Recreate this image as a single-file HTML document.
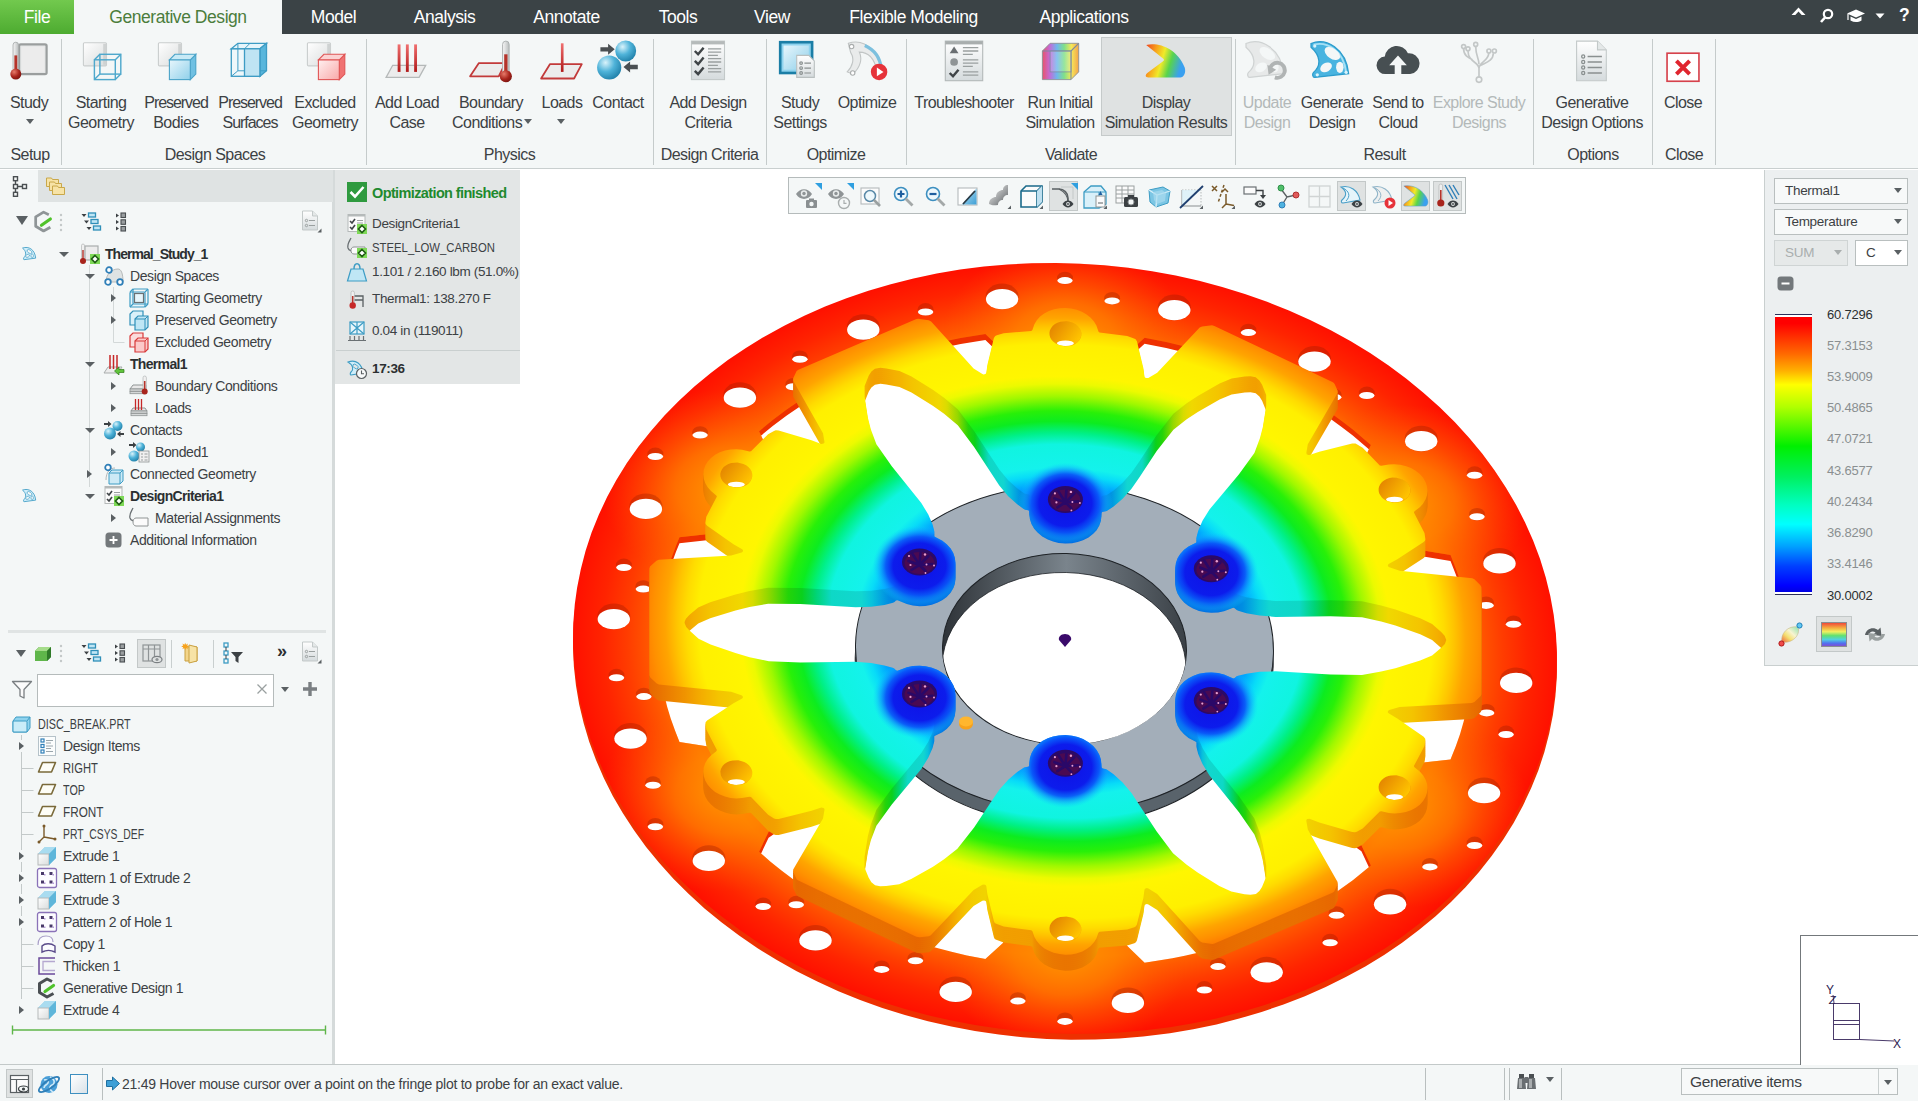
<!DOCTYPE html>
<html><head><meta charset="utf-8"><title>Generative Design</title>
<style>
*{box-sizing:border-box}
html,body{margin:0;padding:0}
body{width:1918px;height:1101px;overflow:hidden;position:relative;background:#fff;font-family:"Liberation Sans",sans-serif;color:#3c4144}
.abs{position:absolute}
#topbar{position:absolute;left:0;top:0;width:1918px;height:34px;background:#3b4346}
#filetab{position:absolute;left:0;top:0;width:74px;height:34px;background:linear-gradient(#72c94e,#4dab30);color:#fff;font-size:17.5px;letter-spacing:-.4px;text-align:center;line-height:34px}
#gdtab{position:absolute;left:74px;top:0;width:208px;height:35px;background:#f4f7f7;color:#4b7d3c;font-size:17.5px;letter-spacing:-.45px;text-align:center;line-height:34px}
.tab{position:absolute;top:0;height:34px;line-height:34px;color:#fff;font-size:17.5px;letter-spacing:-.45px;transform:translateX(-50%);white-space:nowrap}
#ribbon{position:absolute;left:0;top:34px;width:1918px;height:135px;background:#f4f7f7;border-bottom:1px solid #c9cfcf}
.rsep{position:absolute;top:39px;height:126px;width:1px;background:#c5cbcb}
.rb{position:absolute;top:93px;transform:translateX(-50%);text-align:center;font-size:16px;letter-spacing:-.55px;line-height:19.5px;white-space:nowrap;color:#3c4144}
.rb.dis{color:#b3b9b9}
.gl{position:absolute;top:145px;transform:translateX(-50%);font-size:16px;letter-spacing:-.55px;line-height:19px;white-space:nowrap;color:#3c4144}
.ric{position:absolute;top:40px;width:44px;height:44px;transform:translateX(-50%)}
.ns{letter-spacing:-1.05px}
.dar{position:absolute;width:0;height:0;border-left:4.5px solid transparent;border-right:4.5px solid transparent;border-top:5px solid #5a6063}
#left{position:absolute;left:0;top:170px;width:332px;height:894px;background:#f4f7f7}
#leftedge{position:absolute;left:332px;top:170px;width:3px;height:894px;background:#d5dada}
.tr{position:absolute;font-size:14px;letter-spacing:-.4px;line-height:22px;height:22px;white-space:nowrap;color:#3c4144}
.tr b{font-weight:bold;color:#2b2f31;letter-spacing:-.68px}
.exp{position:absolute;width:0;height:0;border-top:4.5px solid transparent;border-bottom:4.5px solid transparent;border-left:5px solid #5a6063}
.col{position:absolute;width:0;height:0;border-left:5px solid transparent;border-right:5px solid transparent;border-top:5.5px solid #5a6063}
.ti{position:absolute;width:22px;height:22px}
#status{position:absolute;left:0;top:1064px;width:1918px;height:37px;background:#f4f7f7;border-top:1px solid #c3c9c9}
#optpanel{position:absolute;left:335px;top:170px;width:185px;height:214px;background:#e3e6e6}
.op{position:absolute;left:36px;font-size:13.5px;letter-spacing:-.35px;line-height:20px;white-space:nowrap;color:#3c4144}
#legend{position:absolute;left:1764px;top:170px;width:154px;height:496px;background:#eceff0;border-left:1px solid #c9cfcf;border-bottom:1px solid #c9cfcf}
.dd{position:absolute;height:26px;background:#f7f9f9;border:1px solid #b9bfbf;font-size:13.5px;letter-spacing:-.3px;line-height:23px;padding-left:10px;color:#3c4144}
.dd i{position:absolute;right:5px;top:9px;width:0;height:0;border-left:4.5px solid transparent;border-right:4.5px solid transparent;border-top:5px solid #5a6063}
.lv{position:absolute;left:62px;font-size:13px;letter-spacing:-.2px;line-height:16px;color:#8a8f91}
#gtb{position:absolute;left:788px;top:177px;width:678px;height:37px;background:#f4f7f7;border:1px solid #b5bbbb}
</style></head><body>


<svg width="0" height="0" style="position:absolute">
<defs>
<linearGradient id="gBlue" x1="0" y1="0" x2="1" y2="1"><stop offset="0" stop-color="#e8f6fc"/><stop offset="1" stop-color="#8fd0ea"/></linearGradient>
<linearGradient id="gRed" x1="0" y1="0" x2="1" y2="1"><stop offset="0" stop-color="#fff0f0"/><stop offset="1" stop-color="#f9a9a9"/></linearGradient>
<linearGradient id="gGrey" x1="0" y1="0" x2="1" y2="1"><stop offset="0" stop-color="#ffffff"/><stop offset="1" stop-color="#d9dcdc"/></linearGradient>
<linearGradient id="gDoc" x1="0" y1="0" x2="0" y2="1"><stop offset="0" stop-color="#ffffff"/><stop offset="1" stop-color="#d5dbdd"/></linearGradient>
<radialGradient id="gBall" cx=".35" cy=".3" r=".75"><stop offset="0" stop-color="#d9f3fb"/><stop offset=".5" stop-color="#4fb3d9"/><stop offset="1" stop-color="#1f7fa8"/></radialGradient>
<radialGradient id="gBulb" cx=".35" cy=".3" r=".75"><stop offset="0" stop-color="#e77a6a"/><stop offset=".6" stop-color="#a8241c"/><stop offset="1" stop-color="#7a1410"/></radialGradient>
<linearGradient id="gRain" x1="0" y1="0" x2="1" y2="0"><stop offset="0" stop-color="#e8546a"/><stop offset=".2" stop-color="#c46ad6"/><stop offset=".4" stop-color="#6fb6ee"/><stop offset=".6" stop-color="#7fe08a"/><stop offset=".8" stop-color="#f5e85a"/><stop offset="1" stop-color="#f4a34a"/></linearGradient>
<linearGradient id="gFringe" x1="0" y1="0" x2="1" y2=".25"><stop offset="0" stop-color="#f0401e"/><stop offset=".28" stop-color="#f7a21c"/><stop offset=".5" stop-color="#f0ea2a"/><stop offset=".72" stop-color="#58d44c"/><stop offset="1" stop-color="#3aa0f0"/></linearGradient>
<linearGradient id="gStem" x1="0" y1="0" x2="1" y2="0"><stop offset="0" stop-color="#f8f8f8"/><stop offset="1" stop-color="#b9bdbd"/></linearGradient>
<linearGradient id="gRedBar" x1="0" y1="0" x2="0" y2="1"><stop offset="0" stop-color="#f07070"/><stop offset="1" stop-color="#b01818"/></linearGradient>
</defs></svg>

<div id="topbar"></div><div id="filetab">File</div><div id="gdtab">Generative Design</div>
<div class="tab" style="left:333.5px">Model</div>
<div class="tab" style="left:444.5px">Analysis</div>
<div class="tab" style="left:566.5px">Annotate</div>
<div class="tab" style="left:678px">Tools</div>
<div class="tab" style="left:772px">View</div>
<div class="tab" style="left:913.5px">Flexible Modeling</div>
<div class="tab" style="left:1084px">Applications</div>
<svg class="abs" style="left:1785px;top:0" width="133" height="34" viewBox="0 0 133 34">
<path d="M6.500 15l7-7.500 7 7.500h-3.800l-3.200-3.400-3.200 3.400z" fill="#fff"/>
<circle cx="43" cy="14" r="4.200" fill="none" stroke="#fff" stroke-width="2.200"/><path d="M40 17.500l-4 4.500" stroke="#fff" stroke-width="2.600"/>
<path d="M62 13.500l9-4 9 4-9 4z" fill="#fff"/><path d="M65.500 16.500v4c3.500 2 7.500 2 11 0v-4l-5.500 2.500z" fill="#fff"/><path d="M63 14v6" stroke="#fff" stroke-width="1.200"/>
<path d="M90.500 13.500h9l-4.500 5z" fill="#fff"/>
<text x="114" y="20.800" font-family="Liberation Sans, sans-serif" font-weight="bold" font-size="17.500" fill="#fff">?</text>
</svg>
<div id="ribbon"></div>
<div class="rsep" style="left:61px"></div>
<div class="rsep" style="left:366px"></div>
<div class="rsep" style="left:653px"></div>
<div class="rsep" style="left:766px"></div>
<div class="rsep" style="left:906px"></div>
<div class="rsep" style="left:1235px"></div>
<div class="rsep" style="left:1533px"></div>
<div class="rsep" style="left:1652px"></div>
<div class="rsep" style="left:1715px"></div>
<div class="abs" style="left:1101px;top:37px;width:131px;height:99px;background:#dfe2e2;border:1px solid #c5caca"></div>
<svg class="ric" style="left:29px" viewBox="0 0 40 40"><g transform="translate(-2 0)"><rect x="13" y="4" width="25" height="27" rx="1.5" fill="#e4e6e6" stroke="#9a9e9e" stroke-width="2"/><rect x="15" y="6" width="21" height="23" fill="#ececec"/>
<rect x="7.5" y="2" width="5" height="27" rx="2.5" fill="url(#gStem)" stroke="#a9adad" stroke-width=".8"/><rect x="8.7" y="14" width="2.6" height="14" fill="#b5332a"/><circle cx="10" cy="31" r="5" fill="url(#gBulb)"/></g></svg>
<div class="rb" style="left:29px">Study</div>
<svg class="ric" style="left:101px" viewBox="0 0 40 40"><rect x="4" y="2.500" width="21" height="21" rx="1" fill="url(#gGrey)" stroke="#c9cdcd"/><path d="M22 3.500h3v19h-3z" fill="#cfd2d2"/><g fill="none" stroke="#4fa8cc" stroke-width="1.300"><rect x="14" y="18" width="19" height="18"/><rect x="19" y="13" width="19" height="18"/><path d="M14 18l5-5M33 18l5-5M14 36l5-5M33 36l5-5"/></g></svg>
<div class="rb" style="left:101px">Starting<br>Geometry</div>
<svg class="ric" style="left:176px" viewBox="0 0 40 40"><rect x="4" y="2.500" width="21" height="21" rx="1" fill="url(#gGrey)" stroke="#c9cdcd"/><path d="M22 3.500h3v19h-3z" fill="#cfd2d2"/><path d="M33 18l5-5v18l-5 5z" fill="#6fc0e2" stroke="#4aa3c8"/><rect x="14" y="18" width="19" height="18" fill="url(#gBlue)" stroke="#4aa3c8"/><path d="M14 18l5-5h19l-5 5z" fill="#c8eaf6" stroke="#4aa3c8"/></svg>
<div class="rb" style="left:176px"><span class=ns>Preserved</span><br>Bodies</div>
<svg class="ric" style="left:250px" viewBox="0 0 40 40"><g stroke="#3d9cc4" stroke-width="1.2"><path d="M3 8l6-5h26l-6 5z" fill="#e6f5fb"/><rect x="3" y="8" width="26" height="25" fill="#e9f6fb" fill-opacity=".6"/><path d="M29 8l6-5v25l-6 5z" fill="#58b6dc"/><path d="M15 8l5-5M9 3v25l-6 5M9 28h26" fill="none" stroke-width=".9"/><rect x="15" y="8" width="14" height="25" fill="#bfe4f3"/></g></svg>
<div class="rb" style="left:250px"><span class=ns>Preserved</span><br><span class=ns>Surfaces</span></div>
<svg class="ric" style="left:325px" viewBox="0 0 40 40"><rect x="4" y="2.500" width="21" height="21" rx="1" fill="url(#gGrey)" stroke="#c9cdcd"/><path d="M22 3.500h3v19h-3z" fill="#cfd2d2"/><path d="M33 18l5-5v18l-5 5z" fill="#f07272" stroke="#e05555"/><rect x="14" y="18" width="19" height="18" fill="url(#gRed)" stroke="#e05555"/><path d="M14 18l5-5h19l-5 5z" fill="#fbd2d2" stroke="#e05555"/></svg>
<div class="rb" style="left:325px">Excluded<br>Geometry</div>
<svg class="ric" style="left:407px" viewBox="0 0 40 40"><path d="M7 23h30l-6 11H1z" fill="#ececec" stroke="#b5b9b9" stroke-width="1.2"/><g fill="url(#gRedBar)"><rect x="11.5" y="4" width="2.6" height="25"/><rect x="19" y="4" width="2.6" height="25"/><rect x="26.500" y="4" width="2.6" height="25"/></g></svg>
<div class="rb" style="left:407px">Add Load<br>Case</div>
<svg class="ric" style="left:491px" viewBox="0 0 40 40"><path d="M9 21h24l-6 12H1z" fill="#ececec" stroke="#c23a3a" stroke-width="1.6" stroke-linejoin="round"/><rect x="30.500" y="1" width="6" height="30" rx="3" fill="url(#gStem)" stroke="#a9adad" stroke-width=".8"/><rect x="32" y="13" width="3" height="17" fill="#b5332a"/><circle cx="33.5" cy="33" r="5.500" fill="url(#gBulb)"/></svg>
<div class="rb" style="left:491px">Boundary<br>Conditions&nbsp;&nbsp;</div>
<svg class="ric" style="left:562px" viewBox="0 0 40 40"><path d="M9 22h29l-7 13H1z" fill="#ececec" stroke="#c23a3a" stroke-width="1.6" stroke-linejoin="round"/><rect x="19" y="3" width="2.400" height="26" fill="url(#gRedBar)"/></svg>
<div class="rb" style="left:562px">Loads</div>
<svg class="ric" style="left:618px" viewBox="0 0 40 40"><circle cx="27" cy="10" r="9.500" fill="url(#gBall)"/><circle cx="12" cy="25" r="11" fill="url(#gBall)"/><path d="M4 6.500h7v-3l6 5-6 5v-3H4z" fill="#4a4f52"/><path d="M38 22.500h-7v-3l-6 5 6 5v-3h7z" fill="#4a4f52"/></svg>
<div class="rb" style="left:618px">Contact</div>
<svg class="ric" style="left:708px" viewBox="0 0 40 40"><rect x="5" y="1" width="30" height="35" fill="url(#gDoc)" stroke="#c3c9c9"/><rect x="5" y="1" width="30" height="3" fill="#b5baba"/>
<g stroke="#3f4447" stroke-width="2.200" fill="none"><path d="M8 10l3 3 5-6"/><path d="M8 19l3 3 5-6"/><path d="M8 28l3 3 5-6"/></g>
<g stroke="#9aa0a0" stroke-width="1.200"><path d="M20 8h12M20 11h12M20 14h9M20 17h12M20 20h12M20 23h9M20 26h12M20 29h12"/></g></svg>
<div class="rb" style="left:708px">Add Design<br>Criteria</div>
<svg class="ric" style="left:800px" viewBox="0 0 40 40"><rect x="2" y="2" width="29" height="28" fill="#8fd3ee" stroke="#1b7ea6" stroke-width="2.400"/><rect x="5" y="5" width="23" height="22" fill="url(#gBlue)"/>
<path d="M17 14h11l5 5v15H17z" fill="url(#gDoc)" stroke="#b9bfbf"/><g stroke="#8a9090" stroke-width="1.100" fill="none"><circle cx="21" cy="21" r="1.200"/><circle cx="21" cy="25.500" r="1.200"/><circle cx="21" cy="30" r="1.200"/><path d="M24 21h6M24 25.500h6M24 30h6"/></g></svg>
<div class="rb" style="left:800px">Study<br>Settings</div>
<svg class="ric" style="left:867px" viewBox="0 0 40 40"><path d="M3 3c9-3 17 1 22 6 5 5 8 12 8 18l-4 1C27 18 22 11 13 11c3 6 1 14-6 20l-5-2c5-5 7-12 3-18z" fill="#e9ebeb" stroke="#c1c5c5"/><path d="M18 5c9 4 14 12 15 21" fill="none" stroke="#7cc0de" stroke-width="3"/><circle cx="6" cy="6" r="2" fill="#fff" stroke="#a9adad"/><circle cx="7" cy="30" r="2" fill="#fff" stroke="#a9adad"/>
<circle cx="31" cy="29" r="7.500" fill="#e6333a"/><path d="M29 25l6 4-6 4z" fill="#fff"/></svg>
<div class="rb" style="left:867px">Optimize</div>
<svg class="ric" style="left:964px" viewBox="0 0 40 40"><rect x="3" y="1" width="34" height="36" fill="url(#gDoc)" stroke="#b3b9b9"/><rect x="3" y="1" width="34" height="3" fill="#a9aeae"/>
<path d="M7 12l4-6 4 6z" fill="#6a6f72"/><circle cx="11" cy="20" r="3.500" fill="#8f9496"/><path d="M7 30l3 3 5-6" stroke="#3f4447" stroke-width="2.200" fill="none"/>
<g stroke="#9aa0a0" stroke-width="1.200"><path d="M19 7h14M19 10h14M19 13h9M19 18h14M19 21h14M19 24h9M19 29h14M19 32h14"/></g></svg>
<div class="rb" style="left:964px">Troubleshooter</div>
<svg class="ric" style="left:1060px" viewBox="0 0 40 40"><path d="M4 10l7-7h26v26l-7 7H4z" fill="url(#gRain)" stroke="#8a8f95" stroke-width=".8"/><path d="M4 10h26v26M30 10l7-7" fill="none" stroke="#7d8aa0" stroke-width="1"/><rect x="11" y="10" width="19" height="19" fill="#fff" fill-opacity=".18" stroke="#7d8aa0" stroke-width=".7"/></svg>
<div class="rb" style="left:1060px">Run Initial<br>Simulation</div>
<svg class="ric" style="left:1166px" viewBox="0 0 40 40"><path d="M2 4.500C14 2 30 8 37 25c1.500 5-1 9-4 9H4c-3 0-3-2-1-4l14-10.500c1.500-1 1.500-2 0-3z" fill="url(#gFringe)"/></svg>
<div class="rb" style="left:1166px">Display<br>Simulation Results</div>
<svg class="ric" style="left:1267px" viewBox="0 0 40 40"><g opacity=".75" transform="translate(-2.500 -2.500) scale(1.140)"><path d="M3 5c12-5 28 4 30 24l-27 3c-2 0-2-3-1-4 6-5 6-13-2-20z" fill="#e3e5e5" stroke="#c3c7c7"/><ellipse cx="20" cy="13" rx="7" ry="4" transform="rotate(35 20 13)" fill="#f4f7f7"/><ellipse cx="15" cy="24" rx="5" ry="3.500" transform="rotate(-30 15 24)" fill="#f4f7f7"/><ellipse cx="26" cy="24" rx="3" ry="4" fill="#f4f7f7"/>
<path d="M22 26a6 6 0 1 1 4 6" fill="none" stroke="#9a9e9e" stroke-width="3"/><path d="M20 22l1 8 6-4z" fill="#9a9e9e"/></g></svg>
<div class="rb dis" style="left:1267px">Update<br>Design</div>
<svg class="ric" style="left:1332px" viewBox="0 0 40 40"><g transform="translate(-2.500 -2.500) scale(1.140)"><path d="M3 5c12-5 28 4 30 24l-27 3c-2 0-2-3-1-4 6-5 6-13-2-20z" fill="#49b4e0" stroke="#2b9ccc"/><path d="M5 6c10-3 24 4 26 22" fill="none" stroke="#a5e0f5" stroke-width="1.500"/><ellipse cx="20" cy="13" rx="7" ry="4" transform="rotate(35 20 13)" fill="#f4f7f7"/><ellipse cx="15" cy="24" rx="5" ry="3.500" transform="rotate(-30 15 24)" fill="#f4f7f7"/><ellipse cx="26" cy="24" rx="3" ry="4.500" fill="#f4f7f7"/><circle cx="6" cy="7" r="1.300" fill="#d9f3fb"/><circle cx="8" cy="30" r="1.300" fill="#d9f3fb"/><circle cx="31" cy="28" r="1.300" fill="#d9f3fb"/></g></svg>
<div class="rb" style="left:1332px">Generate<br>Design</div>
<svg class="ric" style="left:1398px" viewBox="0 0 40 40"><path d="M9 31a8 8 0 0 1-1-16 11 11 0 0 1 21-3 9.500 9.500 0 0 1 2 19z" fill="#474f52"/><path d="M20 14l8 9h-5v9h-6v-9h-5z" fill="#f4f7f7"/></svg>
<div class="rb" style="left:1398px">Send to<br>Cloud</div>
<svg class="ric" style="left:1479px" viewBox="0 0 40 40"><g fill="none" stroke="#c3c7c7" stroke-width="1.500"><path d="M20 34V24M20 26c0-6-10-6-10-16M20 26c0-6 8-6 9-14M20 22c0-5-3-8-3-16M20 24c4-3 13-4 13-12M14 18c-4-2-8-4-8-10"/><circle cx="20" cy="36" r="2.500"/><circle cx="10" cy="8" r="1.800"/><circle cx="17" cy="4" r="1.800"/><circle cx="29" cy="10" r="1.800"/><circle cx="34" cy="12" r="1.800" transform="translate(0 -2)"/><circle cx="6" cy="6" r="1.800"/></g></svg>
<div class="rb dis" style="left:1479px">Explore Study<br>Designs</div>
<svg class="ric" style="left:1592px" viewBox="0 0 40 40"><path d="M6 1h19l8 8v28H6z" fill="url(#gDoc)" stroke="#c3c9c9"/><path d="M25 1v8h8" fill="#e4e8e8" stroke="#c3c9c9"/><g stroke="#8a9090" stroke-width="1.200" fill="none"><circle cx="12" cy="15" r="1.400"/><circle cx="12" cy="20" r="1.400"/><circle cx="12" cy="25" r="1.400"/><circle cx="12" cy="30" r="1.400"/><path d="M16 15h13M16 20h13M16 25h13M16 30h13"/></g></svg>
<div class="rb" style="left:1592px">Generative<br>Design Options</div>
<svg class="ric" style="left:1683px" viewBox="0 0 40 40"><g transform="translate(0 3)"><rect x="5.500" y="9" width="29" height="25.500" fill="#fff" stroke="#d6424c" stroke-width="1.500"/><path d="M14 16l12 12M26 16L14 28" stroke="#e0252f" stroke-width="3.600"/></g></svg>
<div class="rb" style="left:1683px">Close</div>
<div class="dar" style="left:26px;top:119px"></div>
<div class="dar" style="left:524px;top:119px"></div>
<div class="dar" style="left:557px;top:119px"></div>
<div class="gl" style="left:30px">Setup</div>
<div class="gl" style="left:215px">Design Spaces</div>
<div class="gl" style="left:509.5px">Physics</div>
<div class="gl" style="left:709.5px">Design Criteria</div>
<div class="gl" style="left:836px">Optimize</div>
<div class="gl" style="left:1071px">Validate</div>
<div class="gl" style="left:1384.5px">Result</div>
<div class="gl" style="left:1593px">Options</div>
<div class="gl" style="left:1684px">Close</div>
<div id="left"></div><div id="leftedge"></div>
<div class="abs" style="left:38px;top:170px;width:295px;height:32px;background:#dfe3e3"></div>
<svg class="abs" style="left:8px;top:174px" width="24" height="26" viewBox="0 0 24 26"><g fill="#f4f7f7" stroke="#4a4f52" stroke-width="1.400"><path d="M7.500 6v14M10 12.500h5" fill="none"/><rect x="5.500" y="2.700" width="4" height="4"/><rect x="5.500" y="10.500" width="4" height="4"/><rect x="5.500" y="18.300" width="4" height="4"/><rect x="14.500" y="10.500" width="4" height="4"/></g></svg>
<svg class="abs" style="left:44px;top:174px" width="24" height="24" viewBox="0 0 24 24"><g fill="#f7e3a6" stroke="#c9a84a" stroke-width="1"><path d="M2.500 4h5l1 1.500h6v7h-12z"/><path d="M5.500 8h5l1 1.500h6v7h-12z"/><path d="M8.500 12h5l1 1.500h6v7h-12z"/></g></svg>
<div class="col" style="left:15.500px;top:216px;border-left-width:6px;border-right-width:6px;border-top-width:9px"></div>
<svg class="abs" style="left:32px;top:210px" width="23.1" height="23.1" viewBox="0 0 22 22"><path d="M16 4.500L11 2 3.500 6.500v9L11 20l6.500-3.500" fill="none" stroke="#8f9597" stroke-width="2.600" stroke-linejoin="round"/><path d="M9 14.500l8.500-6" stroke="#4fc22a" stroke-width="3" stroke-linecap="round"/></svg>
<svg class="abs" style="left:59px;top:212px" width="4" height="20" viewBox="0 0 4 20"><g fill="#c3c8c8"><circle cx="2" cy="3" r="1.200"/><circle cx="2" cy="8" r="1.200"/><circle cx="2" cy="13" r="1.200"/><circle cx="2" cy="18" r="1.200"/></g></svg>
<svg class="abs" style="left:80px;top:211px" width="22" height="22" viewBox="0 0 22 22"><g fill="#3c4144"><path d="M1.500 3h5l-2.500 3zM4 9.500h5l-2.500 3zM6.500 16h5l-2.500 3z"/></g><g fill="#bfe6f5" stroke="#2f8fb8" stroke-width="1.300"><rect x="8.500" y="2" width="7" height="4"/><rect x="11" y="8.500" width="7" height="4"/><rect x="13.500" y="15" width="7" height="4"/></g></svg>
<svg class="abs" style="left:110px;top:211px" width="22" height="22" viewBox="0 0 22 22"><g fill="#3c4144"><path d="M6 2.500l3 2-3 2zM6 9l3 2-3 2zM6 15.500l3 2-3 2z"/></g><g fill="#9a9ea0" stroke="#4a4f52" stroke-width="1.100"><rect x="11" y="2" width="4.500" height="4.500"/><rect x="11" y="8.800" width="4.500" height="4.500"/><rect x="11" y="15.500" width="4.500" height="4.500"/></g></svg>
<svg class="abs" style="left:299px;top:209px" width="24" height="26" viewBox="0 0 24 26"><path d="M3.500 2h10l5 5v14h-15z" fill="url(#gDoc)" stroke="#c3c9c9"/><path d="M13.500 2v5h5" fill="#e4e8e8" stroke="#c3c9c9"/><g stroke="#9aa0a0" fill="none"><circle cx="7.500" cy="11.500" r="1.200"/><circle cx="7.500" cy="16.500" r="1.200"/><path d="M10 11.500h6M10 16.500h6"/></g><path d="M22.500 19.500v4h-4z" fill="#5a6063"/></svg>
<svg class="abs" style="left:0;top:170px" width="333" height="460" viewBox="0 170 333 460"><g fill="none" stroke="#d3d8d8" stroke-width="1"><path d="M89.500 265v222M113.500 287v55.500h11"/></g></svg>
<svg class="ti" style="left:79px;top:243px" viewBox="0 0 22 22"><rect x="6" y="3" width="13" height="14" fill="#ececec" stroke="#a9adad" stroke-width="1.200"/><rect x="2.500" y="1" width="3" height="15" rx="1.500" fill="#f0f0f0" stroke="#a9adad" stroke-width=".6"/><rect x="3.300" y="7" width="1.400" height="9" fill="#b5332a"/><circle cx="4" cy="18" r="3" fill="#a8241c"/>
<rect x="11" y="11" width="10" height="10" fill="#7ed957"/><path d="M16 12.500l3.500 3.500-3.500 3.500-3.500-3.500z" fill="#fff" stroke="#1f5c14" stroke-width="1.600"/></svg>
<div class="tr" style="left:105px;top:243px"><b style="letter-spacing:-.95px">Thermal_Study_1</b></div>
<div class="col" style="left:59px;top:252px"></div>
<svg class="ti" style="left:102.5px;top:265px" viewBox="0 0 22 22"><path d="M3 17c0-8 6-13 12-13 3 0 5 4 5 13z" fill="#dfe3e3" stroke="#b5b9b9"/><g fill="#fff" stroke="#2f7fb8" stroke-width="1.800"><circle cx="6" cy="5" r="2.800"/><circle cx="5" cy="17" r="2.800"/><circle cx="17" cy="17" r="2.800"/></g></svg>
<div class="tr" style="left:130px;top:265px">Design Spaces</div>
<div class="col" style="left:84.5px;top:274px"></div>
<svg class="ti" style="left:128px;top:287px" viewBox="0 0 22 22"><g fill="none" stroke="#3d9cc4" stroke-width="1.200"><rect x="2" y="5" width="15" height="15" rx="1" fill="#e6f5fb"/><rect x="5" y="2" width="15" height="15" rx="1"/><path d="M2 5l3-3M17 5l3-3M2 20l3-3M17 20l3-3"/></g><rect x="6.500" y="6.500" width="9" height="9" fill="none" stroke="#6a7073" stroke-width="1.200"/></svg>
<div class="tr" style="left:155px;top:287px">Starting Geometry</div>
<div class="exp" style="left:111.0px;top:293.5px"></div>
<svg class="ti" style="left:128px;top:309px" viewBox="0 0 22 22"><path d="M2 5l3-3h10v11l-3 3H2z" fill="#d9f0f9" stroke="#2f8fb8" stroke-width="1.200"/><path d="M7 10l3-3h10v11l-3 3H7z" fill="#bfe6f5" stroke="#2f8fb8" stroke-width="1.200"/><path d="M7 10h10v11M17 10l3-3" fill="none" stroke="#2f8fb8" stroke-width="1"/></svg>
<div class="tr" style="left:155px;top:309px">Preserved Geometry</div>
<div class="exp" style="left:111.0px;top:315.5px"></div>
<svg class="ti" style="left:128px;top:331px" viewBox="0 0 22 22"><path d="M2 5l3-3h10v11l-3 3H2z" fill="#fbdcdc" stroke="#d83a3a" stroke-width="1.200"/><path d="M7 10l3-3h10v11l-3 3H7z" fill="#fbcaca" stroke="#d83a3a" stroke-width="1.200"/><path d="M7 10h10v11M17 10l3-3" fill="none" stroke="#d83a3a" stroke-width="1"/></svg>
<div class="tr" style="left:155px;top:331px">Excluded Geometry</div>
<svg class="ti" style="left:102.5px;top:353px" viewBox="0 0 22 22"><path d="M5 14h14l-4 6H1z" fill="#ececec" stroke="#a9adad"/><g stroke="#c62828" stroke-width="1.500"><path d="M7 2v14M10.500 2v14M14 2v14"/></g><path d="M21 16.500h-5v-2.500l-4.500 4 4.500 4v-2.500h5z" fill="#5fc43a" stroke="#2f7a18" stroke-width=".7"/></svg>
<div class="tr" style="left:130px;top:353px"><b>Thermal1</b></div>
<div class="col" style="left:84.5px;top:362px"></div>
<svg class="ti" style="left:128px;top:375px" viewBox="0 0 22 22"><path d="M2 14l3-4h13v4z" fill="#e8e8e8" stroke="#8f9494"/><rect x="2" y="14" width="16" height="2.200" fill="#d5d8d8" stroke="#8f9494" stroke-width=".8"/><rect x="2" y="16.500" width="16" height="2.200" fill="#d5d8d8" stroke="#8f9494" stroke-width=".8"/><rect x="15" y="1" width="3.400" height="14" rx="1.700" fill="#f0f0f0" stroke="#a9adad" stroke-width=".6"/><rect x="15.900" y="6" width="1.600" height="9" fill="#b5332a"/><circle cx="16.700" cy="16.500" r="3" fill="#a8241c"/></svg>
<div class="tr" style="left:155px;top:375px">Boundary Conditions</div>
<div class="exp" style="left:111.0px;top:381.5px"></div>
<svg class="ti" style="left:128px;top:397px" viewBox="0 0 22 22"><path d="M3 14l2-3h12l2 3z" fill="#e8e8e8" stroke="#8f9494"/><rect x="3" y="14" width="16" height="2.200" fill="#d5d8d8" stroke="#8f9494" stroke-width=".8"/><rect x="3" y="16.500" width="16" height="2.200" fill="#d5d8d8" stroke="#8f9494" stroke-width=".8"/><g stroke="#c62828" stroke-width="1.300"><path d="M7.500 2v11M10.500 2v11M13.500 2v11"/></g></svg>
<div class="tr" style="left:155px;top:397px">Loads</div>
<div class="exp" style="left:111.0px;top:403.5px"></div>
<svg class="ti" style="left:102.5px;top:419px" viewBox="0 0 22 22"><circle cx="14.500" cy="7" r="5" fill="url(#gBall)"/><circle cx="7" cy="14.500" r="6" fill="url(#gBall)"/><path d="M1 4h4v-2l3.500 3-3.500 3v-2H1z" fill="#3c4144"/><path d="M21 14h-3.500v-2l-3.500 3 3.500 3v-2H21z" fill="#3c4144"/></svg>
<div class="tr" style="left:130px;top:419px">Contacts</div>
<div class="col" style="left:84.5px;top:428px"></div>
<svg class="ti" style="left:128px;top:441px" viewBox="0 0 22 22"><circle cx="12.500" cy="6" r="4.500" fill="url(#gBall)"/><circle cx="6" cy="15" r="5.500" fill="url(#gBall)"/><path d="M1 3h4v-2l3.500 3-3.500 3v-2H1z" fill="#3c4144"/><rect x="11" y="10" width="10" height="11" fill="#f0f0f0" stroke="#8f9494" stroke-width=".8"/><g stroke="#8f9494" stroke-width=".9"><path d="M13 13h2M16.500 13h3M13 16h2M16.500 16h3M13 19h2M16.500 19h3"/></g></svg>
<div class="tr" style="left:155px;top:441px">Bonded1</div>
<div class="exp" style="left:111.0px;top:447.5px"></div>
<svg class="ti" style="left:102.5px;top:463px" viewBox="0 0 22 22"><path d="M3 17c0-8 4-12 9-12" fill="none" stroke="#b5b9b9"/><path d="M6 10l3-3h11v11l-3 3H6z" fill="#cdeaf6" stroke="#3d9cc4"/><path d="M6 10h11v11M17 10l3-3" fill="none" stroke="#3d9cc4"/><circle cx="5" cy="4.500" r="2.800" fill="#fff" stroke="#2f7fb8" stroke-width="1.800"/></svg>
<div class="tr" style="left:130px;top:463px">Connected Geometry</div>
<div class="exp" style="left:87.0px;top:469.5px"></div>
<svg class="ti" style="left:102.5px;top:485px" viewBox="0 0 22 22"><rect x="2" y="1.500" width="17" height="17" fill="#fbfbfb" stroke="#b5b9b9"/><rect x="2" y="1.500" width="17" height="2" fill="#b5baba"/><g stroke="#3f4447" stroke-width="1.600" fill="none"><path d="M4 8l2 2 3-4"/><path d="M4 14l2 2 3-4"/></g><g stroke="#9aa0a0"><path d="M11 7.500h6M11 10h6M11 13h6"/></g>
<rect x="11" y="11" width="10" height="10" fill="#7ed957"/><path d="M16 12.500l3.500 3.500-3.500 3.500-3.500-3.500z" fill="#fff" stroke="#1f5c14" stroke-width="1.600"/></svg>
<div class="tr" style="left:130px;top:485px"><b>DesignCriteria1</b></div>
<div class="col" style="left:84.5px;top:494px"></div>
<svg class="ti" style="left:128px;top:507px" viewBox="0 0 22 22"><path d="M5 1c-2 4-4 6-3 10 1 3 4 3 6 2" fill="none" stroke="#6a7073" stroke-width="1.300"/><path d="M8 11h12v8H8c-2 0-3-2-3-4s1-4 3-4z" fill="#fbfbfb" stroke="#8f9494"/></svg>
<div class="tr" style="left:155px;top:507px">Material Assignments</div>
<div class="exp" style="left:111.0px;top:513.5px"></div>
<svg class="ti" style="left:102.5px;top:529px" viewBox="0 0 22 22"><rect x="2.500" y="3.500" width="16" height="15" rx="3.500" fill="#73787b"/><path d="M10.500 7v8M6.500 11h8" stroke="#fff" stroke-width="1.800"/></svg>
<div class="tr" style="left:130px;top:529px">Additional Information</div>
<svg class="abs" style="left:21px;top:245px" width="17" height="17" viewBox="0 0 22 22"><path d="M2 4c8-3 16 2 17 13l-15 2c-1 0-1-2 0-3 3-3 3-8-2-12z" fill="#cfeefa" stroke="#3d9cc4" stroke-width="1.100"/><ellipse cx="11" cy="8.500" rx="3.600" ry="2" transform="rotate(35 11 8.500)" fill="#f4f7f7" stroke="#3d9cc4" stroke-width=".8"/><ellipse cx="8.500" cy="14" rx="2.600" ry="1.800" transform="rotate(-30 8.500 14)" fill="#f4f7f7" stroke="#3d9cc4" stroke-width=".8"/><ellipse cx="14.500" cy="14" rx="1.600" ry="2.300" fill="#f4f7f7" stroke="#3d9cc4" stroke-width=".8"/></svg>
<svg class="abs" style="left:21px;top:487px" width="17" height="17" viewBox="0 0 22 22"><path d="M2 4c8-3 16 2 17 13l-15 2c-1 0-1-2 0-3 3-3 3-8-2-12z" fill="#cfeefa" stroke="#3d9cc4" stroke-width="1.100"/><ellipse cx="11" cy="8.500" rx="3.600" ry="2" transform="rotate(35 11 8.500)" fill="#f4f7f7" stroke="#3d9cc4" stroke-width=".8"/><ellipse cx="8.500" cy="14" rx="2.600" ry="1.800" transform="rotate(-30 8.500 14)" fill="#f4f7f7" stroke="#3d9cc4" stroke-width=".8"/><ellipse cx="14.500" cy="14" rx="1.600" ry="2.300" fill="#f4f7f7" stroke="#3d9cc4" stroke-width=".8"/></svg>
<div class="abs" style="left:8px;top:629.500px;width:318px;height:3px;background:#e0e4e4"></div>
<div class="col" style="left:15.500px;top:650px;border-left-width:5px;border-right-width:5px;border-top-width:7px"></div>
<svg class="abs" style="left:32px;top:643px" width="22" height="22" viewBox="0 0 22 22"><path d="M3 8l4-4h12v10l-4 4H3z" fill="#3f9a35"/><path d="M3 8l4-4h12l-4 4z" fill="#a5dc8a"/><rect x="3" y="8" width="12" height="10" fill="#5fb64a"/><path d="M15 8l4-4v10l-4 4z" fill="#2f7a28"/></svg>
<svg class="abs" style="left:59px;top:643px" width="4" height="20" viewBox="0 0 4 20"><g fill="#c3c8c8"><circle cx="2" cy="3" r="1.200"/><circle cx="2" cy="8" r="1.200"/><circle cx="2" cy="13" r="1.200"/><circle cx="2" cy="18" r="1.200"/></g></svg>
<svg class="abs" style="left:80px;top:642px" width="22" height="22" viewBox="0 0 22 22"><g fill="#3c4144"><path d="M1.500 3h5l-2.500 3zM4 9.500h5l-2.500 3zM6.500 16h5l-2.500 3z"/></g><g fill="#bfe6f5" stroke="#2f8fb8" stroke-width="1.300"><rect x="8.500" y="2" width="7" height="4"/><rect x="11" y="8.500" width="7" height="4"/><rect x="13.500" y="15" width="7" height="4"/></g></svg>
<svg class="abs" style="left:109px;top:642px" width="22" height="22" viewBox="0 0 22 22"><g fill="#3c4144"><path d="M6 2.500l3 2-3 2zM6 9l3 2-3 2zM6 15.500l3 2-3 2z"/></g><g fill="#9a9ea0" stroke="#4a4f52" stroke-width="1.100"><rect x="11" y="2" width="4.500" height="4.500"/><rect x="11" y="8.800" width="4.500" height="4.500"/><rect x="11" y="15.500" width="4.500" height="4.500"/></g></svg>
<div class="abs" style="left:137px;top:639px;width:29px;height:29px;background:#dfe2e2;border:1px solid #c3c8c8"></div>
<svg class="abs" style="left:140px;top:642px" width="24" height="24" viewBox="0 0 24 24"><g fill="none" stroke="#8f9496" stroke-width="1.200"><rect x="3" y="3" width="17" height="16"/><path d="M3 7h17M8.500 3v16M14.500 3v16"/></g><ellipse cx="17" cy="17.500" rx="5" ry="3.200" fill="#dfe2e2" stroke="#7a7f82" stroke-width="1.200"/><circle cx="17" cy="17.500" r="1.600" fill="#8f9496"/></svg>
<div class="abs" style="left:171px;top:640px;width:1px;height:28px;background:#c9cfcf"></div>
<svg class="abs" style="left:180px;top:641px" width="24" height="24" viewBox="0 0 24 24"><path d="M5 6h12v14H5z" fill="#f3d58a" stroke="#c9a040"/><path d="M9 4l8 2v14l-8 2z" fill="#f7e3a6" stroke="#c9a040"/><path d="M4 1l1 2.500L7.500 2 6.500 4.500 9 5.500 6.500 6.500 7.500 9 5 7.500 4 10 3 7.500.500 9l1-2.500L-1 5.500l2.500-1L.500 2 3 3.500z" fill="#f7a21c" transform="translate(2 1) scale(.8)"/></svg>
<div class="abs" style="left:213px;top:640px;width:1px;height:28px;background:#c9cfcf"></div>
<svg class="abs" style="left:221px;top:641px" width="26" height="24" viewBox="0 0 26 24"><g fill="#f4f7f7" stroke="#3d9cc4" stroke-width="1.300"><rect x="3" y="2" width="4" height="4"/><rect x="3" y="10" width="4" height="4"/><rect x="3" y="18" width="4" height="4"/></g><path d="M5 6v4M5 14v4" stroke="#3c4144"/><path d="M10 11h12l-4.500 5v6l-3-2v-4z" fill="#3c4144"/></svg>
<div class="abs" style="left:277px;top:641px;font-size:18px;font-weight:bold;color:#2b2f31;line-height:20px">»</div>
<svg class="abs" style="left:299px;top:640px" width="24" height="26" viewBox="0 0 24 26"><path d="M3.500 2h10l5 5v14h-15z" fill="url(#gDoc)" stroke="#c3c9c9"/><path d="M13.500 2v5h5" fill="#e4e8e8" stroke="#c3c9c9"/><g stroke="#9aa0a0" fill="none"><circle cx="7.500" cy="11.500" r="1.200"/><circle cx="7.500" cy="16.500" r="1.200"/><path d="M10 11.500h6M10 16.500h6"/></g><path d="M22.500 19.500v4h-4z" fill="#5a6063"/></svg>
<svg class="abs" style="left:11px;top:679px" width="22" height="22" viewBox="0 0 22 22"><path d="M1.500 2.500h19l-7.500 8v8.500l-4-2v-6.500z" fill="#fbfbfb" stroke="#7a7f82" stroke-width="1.300" stroke-linejoin="round"/></svg>
<div class="abs" style="left:37px;top:673.500px;width:237px;height:33px;background:#fff;border:1px solid #b5bbbb"></div>
<svg class="abs" style="left:256px;top:683px" width="12" height="12" viewBox="0 0 12 12"><path d="M1.500 1.500l9 9M10.500 1.500l-9 9" stroke="#9aa0a0" stroke-width="1.300"/></svg>
<div class="dar" style="left:280.500px;top:687px"></div>
<svg class="abs" style="left:303px;top:682px" width="14" height="14" viewBox="0 0 14 14"><path d="M7 0v14M0 7h14" stroke="#7a7f82" stroke-width="3.400"/></svg>
<svg class="abs" style="left:0;top:720px" width="333" height="320" viewBox="0 720 333 320"><g fill="none" stroke="#c3c9c9" stroke-width="1"><path d="M21.500 735v264M21.500 768.500h12M21.500 790.500h12M21.500 812.500h12M21.500 834.500h12M21.500 944.500h12M21.500 966.500h12M21.500 988.500h12"/></g><path d="M12 1030h314M12.500 1025.500v9M325.500 1025.500v9" stroke="#5fb64a" stroke-width="1.400" fill="none"/></svg>
<svg class="ti" style="left:11px;top:713px" viewBox="0 0 22 22"><path d="M2 8l3-4h14v11l-3 4H2z" fill="#8fd3ee" stroke="#3d9cc4"/><rect x="2" y="8" width="14" height="11" rx="1" fill="#c9ecf8" stroke="#3d9cc4"/><path d="M16 8l3-4" stroke="#3d9cc4"/></svg>
<div class="tr" style="left:38px;top:713px"><span style="display:inline-block;letter-spacing:0;transform:scaleX(0.77);transform-origin:0 50%">DISC_BREAK.PRT</span></div>
<svg class="ti" style="left:36px;top:735px" viewBox="0 0 22 22"><rect x="2.500" y="1.500" width="17" height="19" fill="#fbfdfd" stroke="#b5c2c9"/><g fill="#fff" stroke="#2f7fb8" stroke-width="1.200"><rect x="5" y="4" width="3" height="3"/><rect x="5" y="9.500" width="3" height="3"/><rect x="5" y="15" width="3" height="3"/></g><g stroke="#9aa6ac"><path d="M10 5.500h7M10 8h5M10 11h7M10 13.500h5M10 16.500h7"/></g></svg>
<div class="tr" style="left:63px;top:735px">Design Items</div>
<div class="abs" style="left:17px;top:740px;width:9px;height:12px;background:#f4f7f7"></div><div class="exp" style="left:19px;top:741.5px"></div>
<svg class="ti" style="left:36px;top:757px" viewBox="0 0 22 22"><path d="M6.500 5.500h13l-4 9.500h-13z" fill="#fdfdf6" stroke="#7a6a3a" stroke-width="1.600" stroke-linejoin="round"/></svg>
<div class="tr" style="left:63px;top:757px"><span style="display:inline-block;letter-spacing:0;transform:scaleX(0.8);transform-origin:0 50%">RIGHT</span></div>
<svg class="ti" style="left:36px;top:779px" viewBox="0 0 22 22"><path d="M6.500 5.500h13l-4 9.500h-13z" fill="#fdfdf6" stroke="#7a6a3a" stroke-width="1.600" stroke-linejoin="round"/></svg>
<div class="tr" style="left:63px;top:779px"><span style="display:inline-block;letter-spacing:0;transform:scaleX(0.77);transform-origin:0 50%">TOP</span></div>
<svg class="ti" style="left:36px;top:801px" viewBox="0 0 22 22"><path d="M6.500 5.500h13l-4 9.500h-13z" fill="#fdfdf6" stroke="#7a6a3a" stroke-width="1.600" stroke-linejoin="round"/></svg>
<div class="tr" style="left:63px;top:801px"><span style="display:inline-block;letter-spacing:0;transform:scaleX(0.84);transform-origin:0 50%">FRONT</span></div>
<svg class="ti" style="left:36px;top:823px" viewBox="0 0 22 22"><g stroke="#7a5a2a" stroke-width="1.400" fill="none"><path d="M8 3v11l-5 5M8 14l11 2"/></g><g fill="#7a5a2a"><circle cx="8" cy="3" r="1.500"/><circle cx="3" cy="19" r="1.500"/><circle cx="19" cy="16" r="1.500"/></g></svg>
<div class="tr" style="left:63px;top:823px"><span style="display:inline-block;letter-spacing:0;transform:scaleX(0.74);transform-origin:0 50%">PRT_CSYS_DEF</span></div>
<svg class="ti" style="left:36px;top:845px" viewBox="0 0 22 22"><path d="M2 9l7-7h11v11l-7 7H2z" fill="#7ec8e6"/><path d="M2 9l7-7h11l-7 7z" fill="#a9dcf0"/><rect x="2" y="9" width="11" height="11" fill="url(#gGrey)" stroke="#b5b9b9"/><path d="M13 9l7-7v11l-7 7z" fill="#5fb6da"/></svg>
<div class="tr" style="left:63px;top:845px">Extrude 1</div>
<div class="abs" style="left:17px;top:850px;width:9px;height:12px;background:#f4f7f7"></div><div class="exp" style="left:19px;top:851.5px"></div>
<svg class="ti" style="left:36px;top:867px" viewBox="0 0 22 22"><rect x="1.500" y="1.500" width="19" height="19" rx="2" fill="#fdfcff" stroke="#8a72b8" stroke-width="1.300"/><g fill="#4a3a6a"><rect x="5" y="5" width="3" height="3"/><rect x="13.500" y="5" width="3" height="3"/><rect x="5" y="13.500" width="3" height="3"/><rect x="13.500" y="13.500" width="3" height="3"/></g><g fill="#b59ad8"><rect x="8" y="7" width="1.500" height="1.500"/><rect x="16.500" y="7" width="1.500" height="1.500"/><rect x="8" y="15.500" width="1.500" height="1.500"/><rect x="16.500" y="15.500" width="1.500" height="1.500"/></g></svg>
<div class="tr" style="left:63px;top:867px">Pattern 1 of Extrude 2</div>
<div class="abs" style="left:17px;top:872px;width:9px;height:12px;background:#f4f7f7"></div><div class="exp" style="left:19px;top:873.5px"></div>
<svg class="ti" style="left:36px;top:889px" viewBox="0 0 22 22"><path d="M2 9l7-7h11v11l-7 7H2z" fill="#7ec8e6"/><path d="M2 9l7-7h11l-7 7z" fill="#a9dcf0"/><rect x="2" y="9" width="11" height="11" fill="url(#gGrey)" stroke="#b5b9b9"/><path d="M13 9l7-7v11l-7 7z" fill="#5fb6da"/></svg>
<div class="tr" style="left:63px;top:889px">Extrude 3</div>
<div class="abs" style="left:17px;top:894px;width:9px;height:12px;background:#f4f7f7"></div><div class="exp" style="left:19px;top:895.5px"></div>
<svg class="ti" style="left:36px;top:911px" viewBox="0 0 22 22"><rect x="1.500" y="1.500" width="19" height="19" rx="2" fill="#fdfcff" stroke="#8a72b8" stroke-width="1.300"/><g fill="#4a3a6a"><rect x="5" y="5" width="3" height="3"/><rect x="13.500" y="5" width="3" height="3"/><rect x="5" y="13.500" width="3" height="3"/><rect x="13.500" y="13.500" width="3" height="3"/></g><g fill="#b59ad8"><rect x="8" y="7" width="1.500" height="1.500"/><rect x="16.500" y="7" width="1.500" height="1.500"/><rect x="8" y="15.500" width="1.500" height="1.500"/><rect x="16.500" y="15.500" width="1.500" height="1.500"/></g></svg>
<div class="tr" style="left:63px;top:911px">Pattern 2 of Hole 1</div>
<div class="abs" style="left:17px;top:916px;width:9px;height:12px;background:#f4f7f7"></div><div class="exp" style="left:19px;top:917.5px"></div>
<svg class="ti" style="left:36px;top:933px" viewBox="0 0 22 22"><path d="M2 12c0-6 3-9 8-9s7 3 7 6" fill="#fbfbff" stroke="#a9a0c8" stroke-width="1.200"/><path d="M6 19v-6c3-3 9-3 13 0v6c-4-2-9-2-13 0z" fill="#fbfbff" stroke="#5a4a8a" stroke-width="1.400"/></svg>
<div class="tr" style="left:63px;top:933px">Copy 1</div>
<svg class="ti" style="left:36px;top:955px" viewBox="0 0 22 22"><path d="M19 3H3v16h16" fill="none" stroke="#6a4a9a" stroke-width="1.500"/><path d="M19 6.500H7v9h12" fill="none" stroke="#b5a8d0" stroke-width="1.300"/></svg>
<div class="tr" style="left:63px;top:955px">Thicken 1</div>
<svg class="ti" style="left:36px;top:977px" viewBox="0 0 22 22"><path d="M16 4.500L11 2 3.500 6.500v9L11 20l6.500-3.500" fill="none" stroke="#4a4f52" stroke-width="3" stroke-linejoin="round"/><path d="M9 14.500l8.500-6" stroke="#4fc22a" stroke-width="3.200" stroke-linecap="round"/></svg>
<div class="tr" style="left:63px;top:977px">Generative Design 1</div>
<svg class="ti" style="left:36px;top:999px" viewBox="0 0 22 22"><path d="M2 9l7-7h11v11l-7 7H2z" fill="#7ec8e6"/><path d="M2 9l7-7h11l-7 7z" fill="#a9dcf0"/><rect x="2" y="9" width="11" height="11" fill="url(#gGrey)" stroke="#b5b9b9"/><path d="M13 9l7-7v11l-7 7z" fill="#5fb6da"/></svg>
<div class="tr" style="left:63px;top:999px">Extrude 4</div>
<div class="abs" style="left:17px;top:1004px;width:9px;height:12px;background:#f4f7f7"></div><div class="exp" style="left:19px;top:1005.5px"></div>
<div id="status"></div>
<div class="abs" style="left:6px;top:1069px;width:27px;height:29px;background:#dfe2e2;border:1px solid #c3c8c8"></div>
<svg class="abs" style="left:8px;top:1072px" width="24" height="24" viewBox="0 0 24 24"><rect x="2.500" y="3.500" width="18" height="17" fill="#fbfbfb" stroke="#5a6063" stroke-width="1.200"/><path d="M2.500 7.500h18M8.500 7.500v13" stroke="#5a6063" stroke-width="1.200"/><ellipse cx="15.500" cy="17" rx="5" ry="3" fill="#f4f7f7" stroke="#3c4144" stroke-width="1.200"/><circle cx="15.500" cy="17" r="1.600" fill="#3c4144"/></svg>
<svg class="abs" style="left:37px;top:1072px" width="24" height="24" viewBox="0 0 24 24"><circle cx="12" cy="12.500" r="8.500" fill="#4a9fd8"/><path d="M7 8c3-1 5 1 4 3s-4 2-4 5M13 5c2 1 5 3 4 6s-3 1-4 4 2 4 3 5" fill="none" stroke="#cfeaf8" stroke-width="1.600"/><ellipse cx="12" cy="12.500" rx="12" ry="4" transform="rotate(-35 12 12.500)" fill="none" stroke="#2f7fb8" stroke-width="1.800"/></svg>
<div class="abs" style="left:70px;top:1074px;width:18px;height:20px;background:linear-gradient(135deg,#fff,#d9e2e8);border:1.500px solid #3d8fc0"></div>
<div class="abs" style="left:102px;top:1068px;width:1px;height:32px;background:#b9bfbf"></div>
<svg class="abs" style="left:105px;top:1076px" width="16" height="15" viewBox="0 0 16 15"><path d="M1.500 4.500h6v-3.500l7 6.500-7 6.500v-3.500h-6z" fill="#3d9fd6" stroke="#1f6f9f" stroke-width="1"/></svg>
<div class="abs" style="left:122px;top:1074px;font-size:14px;letter-spacing:-.27px;line-height:20px;color:#3c4144;white-space:nowrap">21:49 Hover mouse cursor over a point on the fringe plot to probe for an exact value.</div>
<div class="abs" style="left:1425px;top:1068px;width:1px;height:32px;background:#b9bfbf"></div>
<div class="abs" style="left:1504px;top:1068px;width:1px;height:32px;background:#b9bfbf"></div>
<div class="abs" style="left:1509px;top:1068px;width:1px;height:32px;background:#b9bfbf"></div>
<div class="abs" style="left:1561px;top:1068px;width:1px;height:32px;background:#b9bfbf"></div>
<svg class="abs" style="left:1515px;top:1070px" width="24" height="22" viewBox="0 0 24 22"><g fill="#6a6f72"><path d="M4 4h5v4h-5zM14 4h5v4h-5z" fill="#4a4f52"/><path d="M3 8h7l1 11H2zM13 8h7l1 11h-9z"/><rect x="9.500" y="7" width="4" height="6"/></g><path d="M4 9h3v9H4zM14 9h3v9h-3z" fill="#a9adaf"/></svg>
<div class="dar" style="left:1545.500px;top:1077px"></div>
<div class="abs" style="left:1681px;top:1068px;width:217px;height:27px;background:#f7f9f9;border:1px solid #b9bfbf"></div><div class="abs" style="left:1878px;top:1069px;width:1px;height:25px;background:#c9cfcf"></div>
<div class="abs" style="left:1690px;top:1072px;font-size:15.500px;letter-spacing:-.35px;line-height:20px;color:#3c4144;white-space:nowrap">Generative items</div>
<div class="dar" style="left:1883.500px;top:1080px"></div>
<div id="optpanel"></div>
<div class="abs" style="left:336px;top:350px;width:184px;height:1px;background:#c9cfcf"></div>
<svg class="abs" style="left:346px;top:181px" width="22" height="22" viewBox="0 0 22 22"><rect x="1" y="1" width="20" height="20" fill="#2f9a3f"/><path d="M4.500 11l4.500 4.500 8.500-9.500" fill="none" stroke="#fff" stroke-width="2.600"/></svg>
<div class="abs" style="left:372px;top:182.600px;font-size:14.500px;font-weight:bold;letter-spacing:-.62px;line-height:20px;color:#1f8a2f;white-space:nowrap">Optimization finished</div>
<svg class="abs" style="left:346px;top:213px" width="22" height="22" viewBox="0 0 22 22"><rect x="2" y="1.500" width="17" height="17" fill="#fbfbfb" stroke="#b5b9b9"/><rect x="2" y="1.500" width="17" height="2" fill="#b5baba"/><g stroke="#3f4447" stroke-width="1.600" fill="none"><path d="M4 8l2 2 3-4"/><path d="M4 14l2 2 3-4"/></g><g stroke="#9aa0a0"><path d="M11 7.500h6M11 10h6"/></g><rect x="11" y="11" width="10" height="10" fill="#7ed957"/><path d="M16 12.500l3.500 3.500-3.500 3.500-3.500-3.500z" fill="#fff" stroke="#1f5c14" stroke-width="1.600"/></svg>
<svg class="abs" style="left:346px;top:237px" width="22" height="22" viewBox="0 0 22 22"><path d="M5 1c-2 4-4 6-3 10 1 3 4 3 6 2" fill="none" stroke="#6a7073" stroke-width="1.300"/><path d="M8 10h11v7H8c-2 0-3-1.500-3-3.500S6 10 8 10z" fill="#fbfbfb" stroke="#8f9494"/><rect x="11" y="11" width="10" height="10" fill="#7ed957"/><path d="M16 12.500l3.500 3.500-3.500 3.500-3.500-3.500z" fill="#fff" stroke="#1f5c14" stroke-width="1.600"/></svg>
<svg class="abs" style="left:346px;top:261px" width="22" height="22" viewBox="0 0 22 22"><path d="M5 8h12l3.500 12h-19z" fill="#bfe6f5" stroke="#3d9cc4" stroke-width="1.200"/><path d="M8 8c0-7 6-7 6 0" fill="none" stroke="#3d9cc4" stroke-width="1.500"/></svg>
<svg class="abs" style="left:346px;top:288px" width="22" height="22" viewBox="0 0 22 22"><path d="M8 8h9v11M17 12h-9" fill="none" stroke="#5a6063" stroke-width="1.300"/><rect x="5" y="3" width="3.400" height="13" rx="1.700" fill="#f0f0f0" stroke="#a9adad" stroke-width=".6"/><rect x="5.900" y="8" width="1.600" height="8" fill="#b5332a"/><circle cx="6.700" cy="17.500" r="3.200" fill="#c62828"/></svg>
<svg class="abs" style="left:346px;top:320px" width="22" height="22" viewBox="0 0 22 22"><g fill="none" stroke="#3d9cc4" stroke-width="1.200"><rect x="4" y="2" width="14" height="12" fill="#e6f5fb"/><path d="M4 2l14 12M18 2L4 14M11 2v12"/></g><g stroke="#6a7073" stroke-width="1.200"><path d="M2 20.500h18M4 16v4M8.500 16v4M13 16v4M17.500 16v4"/></g></svg>
<svg class="abs" style="left:346px;top:358px" width="22" height="22" viewBox="0 0 22 22"><path d="M2 4c8-3 14 2 15 11l-12 2c-1 0-1-2 0-3 3-3 2-7-3-10z" fill="#cfeefa" stroke="#3d9cc4" stroke-width="1.100"/><ellipse cx="9.500" cy="8.500" rx="3" ry="1.800" transform="rotate(35 9.500 8.500)" fill="#e3e6e6" stroke="#3d9cc4" stroke-width=".8"/><circle cx="15.500" cy="15.500" r="5" fill="#f7f9f9" stroke="#5a6063" stroke-width="1.200"/><path d="M15.500 12.500v3.200h2.500" fill="none" stroke="#5a6063" stroke-width="1.100"/></svg>
<div class="op" style="top:214.3px;left:372px">DesignCriteria1</div>
<div class="op" style="top:238.3px;left:372px"><span style="display:inline-block;letter-spacing:0;transform:scaleX(0.84);transform-origin:0 50%">STEEL_LOW_CARBON</span></div>
<div class="op" style="top:262.3px;left:372px">1.101 / 2.160 lbm (51.0%)</div>
<div class="op" style="top:289.3px;left:372px">Thermal1: 138.270 F</div>
<div class="op" style="top:321.3px;left:372px">0.04 in (119011)</div>
<div class="op" style="top:359.300px;left:372px;font-weight:bold;color:#2b2f31">17:36</div>
<div id="legend"></div>
<div class="dd" style="left:1774px;top:178px;width:134px">Thermal1<i></i></div>
<div class="dd" style="left:1774px;top:209px;width:134px">Temperature<i></i></div>
<div class="dd" style="left:1774px;top:240px;width:74px;background:#e6e9e9;border-color:#cfd4d4;color:#a9aeae">SUM<i style="border-top-color:#a9aeae"></i></div>
<div class="dd" style="left:1855px;top:240px;width:53px;background:#fff">C<i></i></div>
<svg class="abs" style="left:1777px;top:276px" width="17" height="15" viewBox="0 0 17 15"><rect x=".5" y=".5" width="16" height="14" rx="3.500" fill="#73787b"/><path d="M4.500 7.500h8" stroke="#fff" stroke-width="2"/></svg>
<div class="abs" style="left:1775px;top:314px;width:37px;height:281px;background:linear-gradient(#ff0000 0%,#ff0000 3%,#ff6a00 14%,#ffb000 20%,#ffff00 25%,#b0ff00 33%,#00f000 47%,#00f060 58%,#00ffc0 68%,#00ffff 75%,#00a0ff 83%,#0040ff 90%,#0000ff 97%,#0000d8 100%);border-top:1px solid #2b2f5a;border-bottom:1px solid #2b2f5a;box-shadow:0 -2px 0 #fff inset,0 2px 0 #fff inset"></div>
<div class="lv" style="left:1827px;top:306.5px;color:#2b2f31">60.7296</div>
<div class="lv" style="left:1827px;top:337.7px;color:#8a8f91">57.3153</div>
<div class="lv" style="left:1827px;top:368.9px;color:#8a8f91">53.9009</div>
<div class="lv" style="left:1827px;top:400.2px;color:#8a8f91">50.4865</div>
<div class="lv" style="left:1827px;top:431.4px;color:#8a8f91">47.0721</div>
<div class="lv" style="left:1827px;top:462.6px;color:#8a8f91">43.6577</div>
<div class="lv" style="left:1827px;top:493.8px;color:#8a8f91">40.2434</div>
<div class="lv" style="left:1827px;top:525.0px;color:#8a8f91">36.8290</div>
<div class="lv" style="left:1827px;top:556.3px;color:#8a8f91">33.4146</div>
<div class="lv" style="left:1827px;top:587.5px;color:#2b2f31">30.0002</div>
<svg class="abs" style="left:1777px;top:621px" width="28" height="28" viewBox="0 0 28 28"><defs><linearGradient id="lgA" x1="0" y1="1" x2="1" y2="0"><stop offset="0" stop-color="#f0603a"/><stop offset=".35" stop-color="#f4e070"/><stop offset=".6" stop-color="#f8f4d0"/><stop offset="1" stop-color="#8fe0b0"/></linearGradient></defs><path d="M5 21c-2-8 6-17 16-15 3 8-6 17-16 15z" fill="url(#lgA)" stroke="#c9b98a" stroke-width=".6"/><circle cx="4.500" cy="22.500" r="2.600" fill="#f04a4a" stroke="#b01818"/><circle cx="22.500" cy="4.500" r="2.600" fill="#5fc8f4" stroke="#1f7fb8"/></svg>
<div class="abs" style="left:1816px;top:616px;width:36px;height:36px;background:#dfe2e2;border:1px solid #c3c8c8"></div>
<div class="abs" style="left:1821px;top:622px;width:26px;height:25px;border:1px solid #8a8f91;background:linear-gradient(#f04a3a 0%,#f4b040 22%,#f0f060 38%,#60e070 55%,#50d0e0 72%,#5070f0 88%,#8050d0 100%)"></div>
<svg class="abs" style="left:1861px;top:622px" width="28" height="26" viewBox="0 0 28 26"><path d="M4 13c1-6 8-9 13-5l2.500-2.500 1 8.500-8.500-1 2.500-2.500c-3-2-6-.5-7 2.500z" fill="#5a6063"/><path d="M24 12c-1 6-8 9-13 5l-2.500 2.500-1-8.500 8.500 1-2.500 2.500c3 2 6 .5 7-2.500z" fill="#9aa0a0"/></svg>
<div id="gtb"></div>
<div class="abs" style="left:1049px;top:181px;width:29px;height:30px;background:#dfe2e2;border:1px solid #c3c8c8"></div>
<div class="abs" style="left:1337px;top:181px;width:29px;height:30px;background:#dfe2e2;border:1px solid #c3c8c8"></div>
<div class="abs" style="left:1401px;top:181px;width:29px;height:30px;background:#dfe2e2;border:1px solid #c3c8c8"></div>
<div class="abs" style="left:1433px;top:181px;width:29px;height:30px;background:#dfe2e2;border:1px solid #c3c8c8"></div>
<svg class="abs" style="left:792.5px;top:182px" width="29" height="29" viewBox="0 0 29 29"><path d="M3 12c4-6.500 12-6.500 16 0c-4 6.500-12 6.500-16 0z" fill="#8f9496"/><circle cx="11" cy="11.5" r="3.200" fill="#e9ecec"/><circle cx="11" cy="11.5" r="1.700" fill="#8f9496"/><rect x="13" y="18" width="11" height="8" rx="1" fill="#8a8f91"/><circle cx="18.500" cy="22" r="2.200" fill="#f4f7f7"/><rect x="16" y="16.500" width="5" height="2" fill="#8a8f91"/><path d="M22 1h7v7z" fill="#2f9fe0"/></svg>
<svg class="abs" style="left:824.5px;top:182px" width="29" height="29" viewBox="0 0 29 29"><path d="M3 12c4-6.500 12-6.500 16 0c-4 6.500-12 6.500-16 0z" fill="#8f9496"/><circle cx="11" cy="11.5" r="3.200" fill="#e9ecec"/><circle cx="11" cy="11.5" r="1.700" fill="#8f9496"/><circle cx="19" cy="21" r="5.500" fill="#f4f7f7" stroke="#a9aeae" stroke-width="1.400"/><path d="M19 18v3.300h2.500" fill="none" stroke="#a9aeae" stroke-width="1.200"/><path d="M22 1h7v7z" fill="#2f9fe0"/></svg>
<svg class="abs" style="left:856.5px;top:182px" width="29" height="29" viewBox="0 0 29 29"><rect x="4" y="6" width="18" height="16" fill="#fbfbfb" stroke="#b5babc" stroke-width="1.100"/><circle cx="13" cy="14" r="5.500" fill="#eef8fc" stroke="#5a8aa8" stroke-width="1.500"/><path d="M17 18l6 6" stroke="#9aa0a0" stroke-width="2.600"/></svg>
<svg class="abs" style="left:888.5px;top:182px" width="29" height="29" viewBox="0 0 29 29"><circle cx="12" cy="12" r="6.500" fill="#eef8fc" stroke="#3d8fc0" stroke-width="1.600"/><path d="M8.500 12h7M12 8.500v7" stroke="#1f5f9f" stroke-width="2.200"/><path d="M16.500 16.500l7 7" stroke="#a3a8a8" stroke-width="2.800"/></svg>
<svg class="abs" style="left:920.5px;top:182px" width="29" height="29" viewBox="0 0 29 29"><circle cx="12" cy="12" r="6.500" fill="#eef8fc" stroke="#3d8fc0" stroke-width="1.600"/><path d="M8.500 12h7" stroke="#1f5f9f" stroke-width="2.200"/><path d="M16.500 16.500l7 7" stroke="#a3a8a8" stroke-width="2.800"/></svg>
<svg class="abs" style="left:952.5px;top:182px" width="29" height="29" viewBox="0 0 29 29"><defs><linearGradient id="rpg" x1="0" y1="0" x2="1" y2="1"><stop offset="0" stop-color="#bfe4f3"/><stop offset="1" stop-color="#3d9fd6"/></linearGradient></defs><rect x="5" y="6" width="19" height="17" fill="#fff" stroke="#b5babc" stroke-width="1.100"/><path d="M23.500 6.500v16H9z" fill="url(#rpg)"/><path d="M22 9L10 22" stroke="#2b3a44" stroke-width="1.800"/></svg>
<svg class="abs" style="left:984.5px;top:182px" width="29" height="29" viewBox="0 0 29 29"><defs><linearGradient id="shd" x1="0" y1="0" x2="1" y2="1"><stop offset="0" stop-color="#f7f7f7"/><stop offset="1" stop-color="#5a5f62"/></linearGradient></defs><path d="M4 22c0-5 4-7 7-7 0-5 4-7 7-7 0-3 2-5 5-5v10c-3 0-5 2-5 5-3 0-5 2-5 5-3 0-5 1-9-1z" fill="url(#shd)"/><path d="M26 27v-3.500L22.500 27z" fill="#5a6063"/></svg>
<svg class="abs" style="left:1016.5px;top:182px" width="29" height="29" viewBox="0 0 29 29"><path d="M4 9l5-5h16v16l-5 5H4z" fill="#fbfbfb" stroke="#1a6a8a" stroke-width="1.600"/><path d="M4 9h16v16M20 9l5-5" fill="none" stroke="#1a6a8a" stroke-width="1.600"/><path d="M20 9l5-5v16l-5 5z" fill="#bfe0f0"/><path d="M26 27v-3.500L22.500 27z" fill="#5a6063"/></svg>
<svg class="abs" style="left:1048.5px;top:182px" width="29" height="29" viewBox="0 0 29 29"><path d="M3 7h7c5 0 9 4 9 9v4" fill="none" stroke="#5a6063" stroke-width="1.500"/><path d="M10 7c6 3 9 7 9 13" fill="none" stroke="#5a6063" stroke-width="1.200"/><path d="M12 5h12v12" fill="none" stroke="#c3c8c8"/><path d="M13.5 22c3-4.600 8-4.600 11 0c-3 4.600-8 4.600-11 0z" fill="#3c4144"/><circle cx="19" cy="22" r="1.900" fill="#dfe2e2"/><circle cx="19" cy="22" r=".9" fill="#3c4144"/><path d="M22 1h7v7z" fill="#2f9fe0"/></svg>
<svg class="abs" style="left:1080.5px;top:182px" width="29" height="29" viewBox="0 0 29 29"><path d="M3 10l7-6h10l5 6v12l-7 4H3z" fill="#d9f0f9" stroke="#3d9cc4" stroke-width="1.300"/><path d="M3 10h15v16M18 10l7 0" fill="none" stroke="#3d9cc4"/><rect x="15" y="14" width="9" height="11" fill="#fbfbfb" stroke="#8f9494"/><path d="M17 21h5" stroke="#5a6063"/><path d="M17.500 13l2-4 2 4z" fill="#1f5f9f"/><path d="M26 27v-3.500L22.500 27z" fill="#5a6063"/></svg>
<svg class="abs" style="left:1112.5px;top:182px" width="29" height="29" viewBox="0 0 29 29"><g fill="none" stroke="#9aa0a0" stroke-width="1"><rect x="3" y="4" width="18" height="17" fill="#fbfbfb"/><path d="M3 8h18M3 12h18M3 16h18M9 4v17M15 4v17"/></g><rect x="11" y="15" width="14" height="10" rx="1.500" fill="#3c4144"/><circle cx="18" cy="20" r="3" fill="#f4f7f7" stroke="#8a8f91"/><rect x="15" y="13" width="6" height="2.500" fill="#3c4144"/></svg>
<svg class="abs" style="left:1144.5px;top:182px" width="29" height="29" viewBox="0 0 29 29"><path d="M4 8l14-3 7 4-2 12-12 4-6-5z" fill="#7cc6e4" stroke="#3d9cc4"/><path d="M4 8l8 5 13-4M12 13l-1 12" fill="none" stroke="#d9f0f9" stroke-width="1.300"/><path d="M8 10l9-2 4 3-1 8-8 3-3-4z" fill="#a9dcf0" opacity=".7"/></svg>
<svg class="abs" style="left:1176.5px;top:182px" width="29" height="29" viewBox="0 0 29 29"><path d="M5 8h19v16" fill="none" stroke="#b5b9b9" stroke-dasharray="1.500 1.500"/><path d="M5 8v16h19" fill="none" stroke="#8a8f91"/><path d="M5 8h19L5 24z" fill="#d9f0f9" opacity=".8"/><path d="M3 26L26 4" stroke="#1f3f6f" stroke-width="1.800"/><path d="M26 27v-3.500L22.500 27z" fill="#5a6063"/></svg>
<svg class="abs" style="left:1208.5px;top:182px" width="29" height="29" viewBox="0 0 29 29"><g stroke="#7a5a2a" stroke-width="1.500" fill="none"><path d="M3 4l5 5M8 4L3 9"/><path d="M15 3l-3 9M12 12l-3 9" stroke-dasharray="3 2"/><path d="M17 12v10l-4 4M17 22l8 1.500"/><path d="M13 10l3-3 3 3" /></g><path d="M26 27v-3.500L22.500 27z" fill="#5a6063"/></svg>
<svg class="abs" style="left:1240.5px;top:182px" width="29" height="29" viewBox="0 0 29 29"><rect x="3" y="5" width="12" height="7" fill="#fbfbfb" stroke="#6a7073" stroke-width="1.200"/><path d="M15 8.500h7v6" fill="none" stroke="#3c4144" stroke-width="1.400"/><path d="M19 13h6l-3 4z" fill="#3c4144"/><path d="M13.5 22c3-4.600 8-4.600 11 0c-3 4.600-8 4.600-11 0z" fill="#3c4144"/><circle cx="19" cy="22" r="1.900" fill="#dfe2e2"/><circle cx="19" cy="22" r=".9" fill="#3c4144"/></svg>
<svg class="abs" style="left:1272.5px;top:182px" width="29" height="29" viewBox="0 0 29 29"><path d="M8 7l6 8 9-2M14 15l-5 8" fill="none" stroke="#5a6063" stroke-width="1.400"/><circle cx="8" cy="6" r="3" fill="#4fbf6a" stroke="#2f8f4a"/><circle cx="23" cy="13" r="3" fill="#e05a5a" stroke="#b03030"/><circle cx="9" cy="23" r="3" fill="#4fb3e0" stroke="#2f7fb8"/></svg>
<svg class="abs" style="left:1304.5px;top:182px" width="29" height="29" viewBox="0 0 29 29"><g fill="none" stroke="#d0d4d4" stroke-width="1.300"><rect x="4" y="4" width="21" height="21"/><path d="M14.500 4v21M4 14.500h21"/></g></svg>
<svg class="abs" style="left:1336.5px;top:182px" width="29" height="29" viewBox="0 0 29 29"><path d="M4 5c9-2 17 3 19 13l-17 3c-2 0-2-2-1-3 5-4 5-9-1-13z" fill="#e6f5fb" stroke="#4a9fc8" stroke-width="1.100"/><path d="M6 6c6 3 8 8 3 13" fill="none" stroke="#4a9fc8"/><path d="M14.5 22c3-4.600 8-4.600 11 0c-3 4.600-8 4.600-11 0z" fill="#3c4144"/><circle cx="20" cy="22" r="1.900" fill="#dfe2e2"/><circle cx="20" cy="22" r=".9" fill="#3c4144"/></svg>
<svg class="abs" style="left:1368.5px;top:182px" width="29" height="29" viewBox="0 0 29 29"><path d="M4 5c9-2 17 3 19 13l-17 3c-2 0-2-2-1-3 5-4 5-9-1-13z" fill="#eef0f0" stroke="#8fb4c8" stroke-width="1.100"/><path d="M6 6c6 3 8 8 3 13" fill="none" stroke="#8fb4c8"/><circle cx="21" cy="21" r="5.500" fill="#e6333a"/><path d="M19.500 18l4.500 3-4.500 3z" fill="#fff"/></svg>
<svg class="abs" style="left:1400.5px;top:182px" width="29" height="29" viewBox="0 0 29 29"><g transform="translate(1.500 1) scale(.68)"><path d="M2 4.500C14 2 30 8 37 25c1.500 5-1 9-4 9H4c-3 0-3-2-1-4l14-10.500c1.500-1 1.500-2 0-3z" fill="url(#gFringe)" stroke="#5aa0c8" stroke-width=".8"/></g></svg>
<svg class="abs" style="left:1432.5px;top:182px" width="29" height="29" viewBox="0 0 29 29"><rect x="6" y="2" width="3.600" height="17" rx="1.800" fill="#f0f0f0" stroke="#a9adad" stroke-width=".6"/><rect x="7" y="8" width="1.600" height="11" fill="#b5332a"/><circle cx="7.800" cy="21" r="3.600" fill="#a8241c"/><g stroke="#2f7fb8" stroke-width="1.400"><path d="M12 3l8 14M16 3l8 14M20 3l6 10"/></g><path d="M14.5 22c3-4.600 8-4.600 11 0c-3 4.600-8 4.600-11 0z" fill="#3c4144"/><circle cx="20" cy="22" r="1.900" fill="#dfe2e2"/><circle cx="20" cy="22" r=".9" fill="#3c4144"/></svg>
<div class="abs" style="left:1800px;top:935px;width:118px;height:130px;background:#fff;border-left:1px solid #73787b;border-top:1px solid #73787b"></div>
<svg class="abs" style="left:1820px;top:978px" width="90" height="76" viewBox="1820 978 90 76"><g fill="none" stroke="#4a3a6a" stroke-width="1"><rect x="1833.500" y="1003.500" width="26" height="36"/><path d="M1833.500 1020.500h26M1833.500 1024.500h26M1859.500 1039.500l35 1.500M1834 1003l-1-8"/></g>
<text x="1826" y="994" font-family="Liberation Sans, sans-serif" font-size="12" fill="#2b2050">Y</text><text x="1829" y="1004" font-family="Liberation Sans, sans-serif" font-size="11" font-style="italic" fill="#2b2050">Z</text><text x="1893" y="1048" font-family="Liberation Sans, sans-serif" font-size="12" fill="#2b2050">X</text></svg>
<svg class="abs" style="left:336px;top:170px" width="1428" height="894" viewBox="336 170 1428 894">
<defs>
<radialGradient id="tg" gradientUnits="userSpaceOnUse" cx="0" cy="0" r="492" gradientTransform="matrix(1 0.0228 0 0.783 1065.4 631.3)">
<stop offset="0" stop-color="#0060ff"/><stop offset=".33" stop-color="#0078ff"/><stop offset=".375" stop-color="#00a0ff"/><stop offset=".405" stop-color="#08dcf8"/><stop offset=".425" stop-color="#14f2ec"/><stop offset=".485" stop-color="#10f4e0"/><stop offset=".515" stop-color="#00f088"/><stop offset=".545" stop-color="#0cec20"/><stop offset=".572" stop-color="#28f008"/><stop offset=".61" stop-color="#a0f800"/><stop offset=".642" stop-color="#ecfa00"/><stop offset=".662" stop-color="#fff600"/><stop offset=".745" stop-color="#fff000"/><stop offset=".77" stop-color="#ffdc00"/><stop offset=".79" stop-color="#ffc400"/><stop offset=".813" stop-color="#ffa400"/><stop offset=".838" stop-color="#ff9000"/><stop offset=".87" stop-color="#ff7000"/><stop offset=".9" stop-color="#ff5a00"/><stop offset="1" stop-color="#ff3000"/>
</radialGradient>
<radialGradient id="tgw" gradientUnits="userSpaceOnUse" cx="0" cy="0" r="492" gradientTransform="matrix(1 0.0228 0 0.783 1065.4 631.3)"><stop offset="0" stop-color="#0055e0"/><stop offset="0.33" stop-color="#006ae0"/><stop offset="0.375" stop-color="#008ee2"/><stop offset="0.405" stop-color="#08c2dc"/><stop offset="0.425" stop-color="#12d6d0"/><stop offset="0.485" stop-color="#0ed8c6"/><stop offset="0.515" stop-color="#00d478"/><stop offset="0.545" stop-color="#0ad01c"/><stop offset="0.572" stop-color="#24d408"/><stop offset="0.61" stop-color="#8cd800"/><stop offset="0.642" stop-color="#d8dc00"/><stop offset="0.662" stop-color="#f0d800"/><stop offset="0.725" stop-color="#f4c400"/><stop offset="0.758" stop-color="#f4ae00"/><stop offset="0.79" stop-color="#f09400"/><stop offset="0.82" stop-color="#ec8000"/><stop offset="0.85" stop-color="#e86c00"/><stop offset="0.88" stop-color="#e45000"/><stop offset="1" stop-color="#e02800"/></radialGradient>
<radialGradient id="rg" gradientUnits="userSpaceOnUse" cx="0" cy="0" r="492" gradientTransform="matrix(1 0.0228 0 0.783 1065.0 648.4)">
<stop offset="0" stop-color="#ff7a00"/><stop offset=".80" stop-color="#ff7a00"/><stop offset=".84" stop-color="#ff5a00"/><stop offset=".89" stop-color="#ff3c00"/><stop offset=".94" stop-color="#ff2400"/><stop offset="1" stop-color="#ff1000"/>
</radialGradient>
<radialGradient id="bb" cx=".5" cy=".5" r=".5"><stop offset="0" stop-color="#1010e6"/><stop offset=".56" stop-color="#0c1cec"/><stop offset=".72" stop-color="#0a50f8" stop-opacity=".9"/><stop offset=".88" stop-color="#10a0ff" stop-opacity=".45"/><stop offset="1" stop-color="#10d0ff" stop-opacity="0"/></radialGradient>
<linearGradient id="thg" x1="0" y1="0" x2="1" y2=".6"><stop offset="0" stop-color="#e07c00"/><stop offset=".5" stop-color="#f0a000"/><stop offset="1" stop-color="#ffc400"/></linearGradient>
<linearGradient id="hw" x1="0" y1="0" x2="1" y2="0"><stop offset="0" stop-color="#2e3338"/><stop offset=".5" stop-color="#7a848c"/><stop offset="1" stop-color="#3a4046"/></linearGradient>
<clipPath id="hubhole"><ellipse cx="1064.5" cy="649.0" rx="122" ry="95.5" transform="rotate(1.3 1065.0 648.4)"/></clipPath>
<path id="bodyp" d="M650.3,677.4 649.4,675.2 649.4,568.4 650.0,566.6 656.4,560.7 658.9,559.7 731.2,555.6 741.6,552.5 742.5,551.9 743.0,551.1 742.9,550.1 742.2,549.3 733.5,544.2 707.1,525.8 705.6,523.9 705.4,522.4 706.3,516.7 716.9,496.6 716.3,495.4 711.0,491.1 707.7,487.3 705.3,483.2 703.8,478.8 703.3,474.3 703.8,469.8 705.3,465.5 707.7,461.5 711.0,457.9 715.1,454.8 719.8,452.3 725.0,450.5 730.6,449.5 736.3,449.2 742.0,449.7 749.4,451.4 751.0,451.2 768.1,434.2 774.0,430.9 775.8,430.3 778.6,430.5 811.5,440.2 821.3,443.9 823.6,443.6 824.3,442.9 824.5,441.9 823.0,433.2 793.2,380.7 793.1,378.4 796.6,371.1 798.4,369.8 916.4,319.1 918.3,318.7 928.7,320.2 931.1,321.5 973.6,368.5 982.4,374.0 983.6,374.5 985.4,374.1 986.3,373.1 987.4,364.7 993.9,338.1 995.2,336.1 996.8,335.3 1003.6,333.2 1031.3,330.9 1032.4,329.9 1034.4,324.2 1036.8,320.2 1040.1,316.6 1044.2,313.5 1048.9,311.0 1054.1,309.2 1059.7,308.2 1065.4,307.9 1071.1,308.5 1076.7,309.8 1081.9,311.8 1086.6,314.5 1090.7,317.7 1094.0,321.5 1096.4,325.6 1098.4,331.4 1099.5,332.4 1127.2,336.0 1134.0,338.4 1135.6,339.3 1136.9,341.3 1143.4,368.3 1144.5,376.7 1145.0,377.5 1146.0,378.1 1148.3,377.9 1157.2,372.7 1199.7,327.6 1202.1,326.4 1212.0,325.3 1214.4,325.9 1332.4,382.0 1333.9,383.1 1334.6,384.1 1337.7,390.8 1337.7,392.7 1307.8,444.2 1306.3,452.9 1306.7,454.2 1308.1,455.0 1309.5,455.0 1319.3,451.8 1352.2,443.6 1355.5,443.6 1362.7,447.8 1379.8,465.5 1381.4,465.8 1388.8,464.5 1394.1,464.2 1400.2,464.7 1406.2,466.2 1411.0,468.0 1415.3,470.5 1419.8,474.0 1423.1,477.8 1425.5,481.9 1426.9,486.0 1427.5,491.1 1427.0,495.3 1425.5,499.6 1422.8,503.9 1419.8,507.2 1414.5,511.3 1413.9,512.5 1424.5,533.0 1425.4,539.2 1425.1,540.6 1423.7,542.1 1397.3,559.3 1388.6,564.1 1387.8,565.2 1388.2,566.5 1389.3,567.3 1399.7,570.8 1472.3,578.3 1474.4,579.3 1480.2,584.9 1481.4,587.0 1481.4,694.2 1480.8,696.0 1474.4,701.9 1471.9,702.9 1399.6,707.0 1389.2,710.1 1388.3,710.7 1387.8,711.5 1387.9,712.5 1388.6,713.3 1397.3,718.4 1423.7,736.8 1425.2,738.7 1425.4,740.2 1424.5,745.9 1413.9,766.0 1414.5,767.2 1419.8,771.5 1423.1,775.3 1425.5,779.4 1427.0,783.8 1427.5,788.3 1427.0,792.8 1425.5,797.1 1423.1,801.1 1419.8,804.7 1415.7,807.8 1411.0,810.3 1405.8,812.1 1400.2,813.1 1394.5,813.4 1388.8,812.9 1381.4,811.2 1379.8,811.4 1362.7,828.4 1356.8,831.7 1355.0,832.3 1352.2,832.1 1319.3,822.4 1309.5,818.7 1307.2,819.0 1306.5,819.7 1306.3,820.7 1307.8,829.4 1337.6,881.9 1337.7,884.2 1334.2,891.5 1332.4,892.8 1214.4,943.5 1212.5,943.9 1202.1,942.4 1199.7,941.1 1157.2,894.1 1148.4,888.5 1146.9,888.1 1145.4,888.5 1144.5,889.5 1143.4,897.9 1136.9,924.5 1135.9,926.2 1134.4,927.2 1127.2,929.4 1099.5,931.7 1098.4,932.7 1096.4,938.4 1094.2,942.1 1090.7,946.0 1086.6,949.1 1082.3,951.4 1076.3,953.5 1071.1,954.4 1065.4,954.7 1059.7,954.1 1053.7,952.7 1048.9,950.8 1044.5,948.4 1040.1,944.9 1036.6,940.8 1034.4,937.0 1032.4,931.2 1031.3,930.2 1003.6,926.6 995.6,923.6 994.6,922.7 993.9,921.3 987.4,894.3 986.3,885.9 985.6,885.0 984.1,884.4 982.4,884.7 973.6,889.9 930.8,935.3 928.7,936.2 919.8,937.2 916.4,936.7 798.4,880.6 796.6,879.2 793.1,871.8 793.2,869.5 823.0,818.4 824.5,809.7 824.3,808.7 823.6,808.0 821.3,807.6 811.5,810.8 778.6,819.0 775.8,819.1 774.0,818.4 768.1,814.8 751.0,797.1 749.4,796.8 742.0,798.1 736.3,798.4 730.6,797.9 725.0,796.6 719.8,794.6 715.1,791.9 711.0,788.6 707.7,784.8 705.3,780.7 703.8,776.3 703.3,771.8 703.8,767.3 705.3,763.0 707.7,759.0 711.0,755.4 716.3,751.3 716.9,750.1 706.3,729.6 705.4,723.8 705.6,722.3 707.1,720.5 733.5,703.3 742.2,698.5 743.0,697.2 742.5,696.0 741.4,695.3 731.1,691.8 658.9,684.4 656.4,683.3ZM684.6,622.1 684.6,623.1 686.2,626.9 689.5,630.6 698.6,638.7 710.6,644.4 735.4,653.1 749.6,657.2 768.8,661.3 800.4,662.4 855.2,661.7 871.1,663.0 884.4,665.4 892.6,667.8 894.2,668.5 896.2,670.4 897.5,670.8 906.8,667.3 912.8,666.1 919.5,665.8 925.3,666.3 931.8,667.7 937.8,670.1 942.6,672.9 946.7,676.2 950.6,680.6 953.4,685.4 954.9,689.9 955.4,694.4 954.9,699.6 953.1,704.7 950.6,708.7 946.7,712.9 942.3,716.2 933.6,720.5 933.3,721.6 934.3,723.9 934.3,725.3 932.6,731.9 928.3,741.8 921.3,753.0 891.8,788.4 876.4,809.7 870.8,824.5 867.9,835.9 864.6,856.7 864.6,867.7 868.7,877.8 871.4,882.2 875.1,885.3 880.2,886.3 886.1,886.1 899.2,884.2 911.2,879.1 933.0,866.7 944.1,859.3 957.4,848.8 974.1,827.5 991.3,801.4 999.5,789.6 1008.2,779.8 1017.2,772.1 1024.1,767.5 1028.1,766.8 1029.3,766.0 1029.7,765.1 1029.4,762.4 1029.9,757.9 1031.5,753.2 1034.2,748.4 1037.6,744.8 1042.3,741.1 1047.8,738.3 1053.1,736.5 1058.7,735.4 1065.4,735.1 1072.1,735.7 1077.7,737.0 1083.0,739.1 1088.5,742.2 1093.2,746.0 1096.6,749.9 1099.3,754.7 1100.9,759.5 1101.4,764.1 1101.1,766.7 1101.5,767.6 1102.5,768.4 1105.5,768.9 1107.1,769.7 1113.6,774.3 1122.6,782.4 1131.5,793.0 1156.7,831.6 1173.0,853.3 1186.7,864.8 1198.0,872.8 1219.3,886.0 1231.3,891.6 1244.5,894.2 1250.4,894.8 1255.9,893.9 1259.4,891.1 1262.0,887.0 1266.2,876.7 1266.2,865.8 1262.9,844.9 1260.0,833.3 1254.4,818.4 1239.0,796.3 1209.5,759.5 1202.5,748.1 1198.2,738.0 1196.5,731.3 1196.5,729.8 1197.5,727.6 1197.2,726.5 1188.5,721.9 1184.1,718.3 1180.2,714.0 1177.7,709.8 1175.9,704.7 1175.4,699.4 1175.9,694.9 1177.4,690.5 1180.2,685.8 1184.1,681.6 1188.2,678.5 1193.0,676.0 1199.0,673.8 1205.5,672.7 1211.3,672.4 1218.0,673.1 1224.0,674.5 1233.3,678.4 1234.6,678.1 1236.6,676.3 1238.2,675.7 1246.4,673.7 1259.7,671.8 1275.6,671.3 1330.4,674.5 1362.0,674.9 1381.2,671.6 1395.4,668.2 1420.2,660.6 1432.1,655.4 1441.5,647.6 1444.9,643.9 1446.3,640.1 1444.6,635.7 1441.2,631.9 1432.1,623.9 1420.2,618.2 1395.4,609.5 1381.2,605.4 1362.0,601.3 1330.4,600.2 1275.6,600.9 1259.7,599.6 1246.4,597.2 1238.2,594.8 1236.6,594.1 1234.6,592.2 1233.3,591.8 1224.0,595.3 1218.0,596.5 1211.3,596.8 1205.5,596.3 1199.0,594.9 1193.0,592.5 1188.2,589.7 1184.1,586.4 1180.2,582.0 1177.4,577.2 1175.9,572.7 1175.4,568.2 1175.9,563.0 1177.7,557.9 1180.2,553.9 1184.1,549.7 1188.5,546.4 1197.2,542.1 1197.5,541.0 1196.5,538.7 1196.5,537.3 1198.2,530.7 1202.5,520.8 1209.5,509.6 1239.0,474.2 1254.4,452.9 1260.0,438.1 1262.9,426.7 1266.2,405.9 1266.2,394.9 1262.1,384.8 1259.4,380.4 1255.7,377.3 1250.6,376.3 1244.7,376.5 1231.6,378.4 1219.6,383.5 1197.8,395.9 1186.7,403.3 1173.4,413.8 1156.7,435.1 1139.5,461.2 1131.3,473.0 1122.6,482.8 1113.6,490.5 1106.7,495.1 1102.7,495.8 1101.5,496.6 1101.1,497.5 1101.4,500.2 1100.9,504.7 1099.3,509.4 1096.6,514.2 1093.2,517.8 1088.5,521.5 1083.0,524.3 1077.7,526.1 1072.1,527.2 1065.4,527.5 1058.7,526.9 1053.1,525.6 1047.8,523.5 1042.3,520.4 1037.6,516.6 1034.2,512.7 1031.5,507.9 1029.9,503.1 1029.4,498.5 1029.7,495.9 1029.3,495.0 1028.3,494.2 1025.3,493.7 1023.7,492.9 1017.2,488.3 1008.2,480.2 999.3,469.6 974.1,431.0 957.8,409.3 944.1,397.8 932.8,389.8 911.5,376.6 899.5,371.0 886.3,368.4 880.4,367.8 874.9,368.7 871.4,371.5 868.8,375.6 864.6,385.9 864.6,396.8 867.9,417.7 870.8,429.3 876.4,444.2 891.8,466.3 921.3,503.1 928.3,514.5 932.6,524.6 934.3,531.3 934.3,532.8 933.3,535.0 933.6,536.1 942.3,540.7 946.7,544.3 950.6,548.6 953.1,552.8 954.9,557.9 955.4,563.2 954.9,567.7 953.4,572.1 950.6,576.8 946.7,581.0 942.6,584.1 937.8,586.6 931.8,588.8 925.3,589.9 919.5,590.2 912.8,589.5 906.8,588.1 897.5,584.2 896.0,584.6 894.5,586.0 893.0,586.8 884.4,588.9 871.1,590.8 855.7,591.3 800.4,588.1 768.1,587.8 749.5,591.0 735.5,594.4 710.2,602.2 698.2,607.5 689.3,615.0 685.9,618.7ZM1081.4,930.0 1081.3,927.6 1080.6,925.2 1079.3,922.9 1077.4,920.9 1075.1,919.1 1072.5,917.8 1066.4,916.4 1060.3,916.9 1057.4,917.8 1054.9,919.2 1052.7,920.9 1051.1,923.0 1049.9,925.2 1049.4,927.7 1049.5,930.1 1050.2,932.5 1051.5,934.8 1053.4,936.8 1055.7,938.6 1058.3,939.9 1064.4,941.3 1070.5,940.8 1073.4,939.9 1075.9,938.5 1078.1,936.8 1079.7,934.7 1080.9,932.4ZM1410.4,789.6 1410.5,787.1 1409.9,784.7 1408.8,782.4 1407.2,780.2 1405.0,778.4 1402.5,776.9 1396.6,775.2 1390.3,775.4 1386.5,776.5 1383.9,777.9 1381.8,779.7 1380.1,781.7 1379.0,784.0 1378.5,786.4 1378.6,788.8 1379.3,791.3 1380.6,793.5 1382.5,795.6 1384.7,797.3 1387.4,798.6 1393.4,800.1 1398.6,799.8 1401.6,799.0 1404.2,797.7 1406.5,796.1 1408.3,794.2 1409.6,791.9ZM752.2,774.6 752.3,772.1 751.8,769.7 750.7,767.4 749.0,765.2 746.9,763.4 744.3,761.9 738.4,760.2 732.2,760.4 729.2,761.2 726.6,762.4 724.3,764.0 722.5,766.0 720.9,769.0 720.3,771.4 720.9,775.5 722.0,777.8 723.6,779.9 725.8,781.7 728.3,783.2 734.2,784.9 740.5,784.8 743.4,784.0 746.1,782.7 748.3,781.1 750.2,779.1 751.5,776.9ZM752.3,476.2 752.2,473.8 751.5,471.3 750.2,469.1 748.3,467.0 746.1,465.3 743.4,464.0 737.4,462.5 731.2,463.0 728.3,464.0 725.8,465.4 723.6,467.1 722.0,469.2 720.9,471.4 720.3,473.8 720.4,476.3 721.2,478.7 722.5,481.0 724.3,483.0 726.6,484.7 729.2,486.1 735.3,487.5 741.5,487.0 744.3,486.1 746.9,484.7 749.0,482.9 750.7,480.9 751.8,478.6ZM1410.4,492.0 1410.5,489.6 1409.9,487.1 1408.8,484.8 1407.2,482.7 1405.0,480.9 1402.5,479.4 1396.6,477.7 1392.4,477.6 1389.3,478.1 1386.5,479.0 1383.9,480.4 1381.8,482.1 1380.1,484.2 1379.0,486.4 1378.5,488.8 1378.6,491.3 1379.3,493.7 1381.8,497.4 1383.9,499.2 1386.5,500.7 1392.4,502.4 1398.6,502.2 1401.6,501.4 1404.2,500.2 1406.5,498.6 1408.3,496.6 1409.6,494.4ZM1081.3,335.8 1081.4,333.3 1080.9,330.9 1079.7,328.5 1078.1,326.4 1075.9,324.6 1073.4,323.1 1069.5,321.8 1066.4,321.3 1060.3,321.8 1057.4,322.7 1054.9,324.1 1052.7,325.8 1051.1,327.9 1049.9,330.2 1049.4,332.6 1049.5,335.0 1050.2,337.4 1051.5,339.7 1053.4,341.7 1055.7,343.5 1058.3,344.8 1064.4,346.2 1069.5,346.0 1072.5,345.2 1075.1,343.9 1077.4,342.3 1079.3,340.3 1080.6,338.1Z"/>
<clipPath id="swc"><path d="M649.4,568.4 649.4,691.2 649.8,692.7 656.1,699.0 658.5,700.3 727.2,707.4 707.1,720.5 705.9,721.6 705.4,723.0 705.4,739.4 706.1,744.9 711.2,755.3 707.5,759.3 705.3,763.0 703.8,767.3 703.3,771.8 703.3,788.2 703.8,792.3 705.3,796.7 707.7,800.8 711.3,804.8 715.1,807.9 719.8,810.6 725.0,812.6 730.2,813.8 736.7,814.4 742.0,814.1 749.4,812.8 751.0,813.1 768.1,830.8 774.4,834.6 776.2,835.2 778.6,835.0 811.5,826.8 819.6,824.1 793.1,869.9 793.0,887.4 796.4,894.9 798.4,896.6 916.4,952.7 918.8,953.3 928.7,952.2 931.1,951.0 973.6,905.9 982.5,900.7 984.8,900.5 986.3,901.9 987.4,910.3 993.9,937.3 995.2,939.3 1003.6,942.6 1031.3,946.2 1032.4,947.2 1034.4,953.0 1036.8,957.1 1040.1,960.9 1044.2,964.1 1048.9,966.8 1054.1,968.8 1059.7,970.1 1065.4,970.7 1071.1,970.4 1076.7,969.4 1081.9,967.6 1086.6,965.1 1090.7,962.0 1094.0,958.4 1096.4,954.4 1098.4,948.7 1099.5,947.7 1127.2,945.4 1135.6,942.5 1136.9,940.5 1143.4,913.9 1144.5,905.5 1145.4,904.5 1147.2,904.1 1157.2,910.1 1199.7,957.1 1202.1,958.4 1213.0,959.9 1332.4,908.8 1334.2,907.5 1337.8,899.8 1337.7,882.3 1311.2,835.3 1319.3,838.4 1352.2,848.1 1355.0,848.3 1362.7,844.4 1379.8,827.4 1381.4,827.2 1388.8,828.9 1394.5,829.4 1400.2,829.1 1405.8,828.1 1411.0,826.3 1415.7,823.8 1419.8,820.7 1423.1,817.1 1425.5,813.1 1427.0,808.5 1427.5,804.3 1427.5,788.0 1427.0,783.8 1425.5,779.4 1423.1,775.3 1419.6,771.4 1424.7,761.2 1425.4,755.8 1425.3,739.1 1423.7,736.8 1403.6,722.8 1471.9,718.9 1474.4,717.9 1481.0,711.7 1481.4,710.2 1481.4,587.0 1480.5,585.2 1474.7,579.6 1471.9,578.2 1403.6,571.2 1423.7,558.1 1424.9,557.0 1425.4,555.6 1425.4,539.2 1424.7,533.7 1419.6,523.3 1423.3,519.3 1425.5,515.6 1427.0,511.3 1427.5,506.8 1427.5,490.4 1426.9,486.0 1425.5,481.9 1423.3,478.1 1419.8,474.0 1416.0,471.0 1410.6,467.9 1405.8,466.0 1400.2,464.7 1394.1,464.2 1388.8,464.5 1381.4,465.8 1379.8,465.5 1362.7,447.8 1356.4,444.0 1354.6,443.4 1352.2,443.6 1319.3,451.8 1311.2,454.5 1337.7,408.7 1337.8,391.2 1334.4,383.7 1332.4,382.0 1214.4,325.9 1212.0,325.3 1202.1,326.4 1199.7,327.6 1157.2,372.7 1148.3,377.9 1146.0,378.1 1144.5,376.7 1143.4,368.3 1136.9,341.3 1135.6,339.3 1127.2,336.0 1099.5,332.4 1098.4,331.4 1096.4,325.6 1094.0,321.5 1090.7,317.7 1086.6,314.5 1081.9,311.8 1076.7,309.8 1071.1,308.5 1065.4,307.9 1059.7,308.2 1054.1,309.2 1048.9,311.0 1044.2,313.5 1040.1,316.6 1036.8,320.2 1034.4,324.2 1032.4,329.9 1031.3,330.9 1003.6,333.2 995.2,336.1 993.9,338.1 987.4,364.7 986.3,373.1 985.4,374.1 983.6,374.5 973.6,368.5 931.1,321.5 928.7,320.2 917.8,318.7 798.4,369.8 796.6,371.1 793.0,378.8 793.1,396.3 819.6,443.3 811.5,440.2 778.6,430.5 775.8,430.3 768.1,434.2 751.0,451.2 749.4,451.4 742.0,449.7 736.3,449.2 730.6,449.5 725.0,450.5 719.8,452.3 715.1,454.8 711.0,457.9 707.7,461.5 705.3,465.5 703.8,470.1 703.3,474.3 703.3,490.6 703.8,494.8 705.3,499.2 707.7,503.3 711.2,507.2 706.1,517.4 705.4,522.8 705.5,539.5 707.1,541.8 727.2,555.8 658.9,559.7 656.4,560.7 649.8,566.9ZM955.5,710.8 955.5,694.8 954.9,689.9 953.3,685.1 950.6,680.6 947.0,676.5 942.6,672.9 937.5,670.0 931.4,667.6 925.7,666.3 919.9,665.8 913.2,666.1 907.2,667.2 897.5,670.8 896.0,670.3 893.0,667.9 884.4,665.4 871.1,663.0 855.7,661.8 800.4,662.4 768.3,661.3 749.5,657.2 735.5,653.2 710.5,644.4 698.4,638.6 689.6,630.7 698.4,623.3 710.5,618.1 735.5,610.4 749.5,607.0 768.2,603.8 800.4,604.1 855.7,607.3 871.1,606.8 884.4,604.9 893.0,602.8 896.0,600.6 897.5,600.2 906.8,604.1 912.8,605.5 919.5,606.2 925.3,605.9 931.8,604.8 937.8,602.6 942.6,600.1 946.7,597.0 950.6,592.8 953.4,588.1 954.9,583.7 955.4,579.2 955.4,562.5 954.9,557.9 953.3,553.1 950.6,548.6 946.7,544.3 942.3,540.7 934.3,536.8 934.3,531.7 932.7,525.1 928.3,514.5 921.3,503.1 891.8,466.3 876.4,444.2 870.8,429.3 867.9,417.7 865.1,400.4 868.7,391.8 871.1,387.8 875.3,384.6 880.0,383.8 885.8,384.3 899.5,387.0 911.5,392.6 932.8,405.8 944.1,413.8 957.8,425.3 974.1,447.0 999.3,485.6 1008.2,496.2 1017.2,504.3 1023.7,508.9 1025.3,509.7 1028.3,510.2 1029.3,511.0 1029.9,519.1 1031.5,523.9 1034.2,528.7 1037.6,532.6 1042.3,536.4 1047.8,539.5 1053.1,541.6 1058.7,542.9 1065.4,543.5 1072.1,543.2 1077.7,542.1 1083.0,540.3 1088.5,537.5 1093.2,533.8 1096.6,530.2 1099.3,525.4 1100.9,520.7 1101.5,512.6 1102.5,511.9 1105.5,511.5 1107.1,510.8 1113.6,506.5 1122.6,498.8 1131.5,488.6 1156.7,451.1 1173.0,430.2 1186.7,419.3 1198.0,411.9 1219.3,399.6 1231.3,394.5 1245.0,392.5 1250.8,392.3 1255.7,393.3 1259.7,396.7 1262.1,400.8 1265.7,409.5 1262.9,426.7 1260.0,438.1 1254.4,452.9 1239.0,474.2 1209.5,509.6 1202.5,520.8 1198.1,531.1 1196.5,537.7 1196.5,542.7 1188.5,546.4 1184.1,549.7 1180.2,553.9 1177.5,558.3 1175.9,563.0 1175.4,567.5 1175.4,584.2 1175.9,588.7 1177.4,593.2 1180.2,598.0 1184.1,602.4 1188.2,605.7 1193.0,608.5 1199.0,610.9 1205.5,612.3 1211.3,612.8 1218.0,612.5 1224.0,611.3 1233.3,607.8 1234.8,608.3 1237.8,610.7 1246.4,613.2 1259.7,615.6 1275.1,616.8 1330.4,616.2 1362.6,617.3 1381.3,621.4 1395.3,625.4 1420.3,634.2 1432.4,640.0 1441.2,647.9 1432.4,655.3 1420.3,660.5 1395.3,668.2 1381.3,671.6 1362.6,674.8 1330.4,674.5 1275.1,671.3 1259.7,671.8 1246.4,673.7 1237.8,675.8 1234.8,678.0 1233.3,678.4 1224.0,674.5 1218.0,673.1 1211.3,672.4 1205.5,672.7 1199.0,673.8 1193.0,676.0 1188.2,678.5 1184.1,681.6 1180.2,685.8 1177.4,690.5 1175.9,694.9 1175.4,699.4 1175.4,716.1 1175.9,720.7 1177.5,725.5 1180.2,730.0 1184.1,734.3 1188.5,737.9 1196.5,741.8 1196.5,746.9 1198.1,753.5 1202.5,764.1 1209.5,775.5 1239.0,812.3 1254.4,834.4 1260.0,849.3 1262.9,860.9 1265.7,878.2 1262.1,886.8 1259.4,891.1 1255.9,893.9 1251.1,894.8 1244.7,894.2 1231.8,891.8 1219.6,886.1 1197.8,872.7 1186.7,864.9 1173.4,853.8 1156.7,831.6 1131.3,792.7 1122.6,782.4 1113.6,774.3 1106.7,769.4 1102.7,768.5 1101.5,767.6 1100.9,759.5 1099.3,754.7 1096.6,749.9 1093.2,746.0 1088.5,742.2 1083.0,739.1 1077.7,737.0 1072.1,735.7 1065.4,735.1 1058.7,735.4 1053.1,736.5 1047.8,738.3 1042.3,741.1 1037.6,744.8 1034.2,748.4 1031.5,753.2 1029.9,757.9 1029.3,766.0 1028.3,766.7 1025.3,767.1 1023.7,767.8 1017.2,772.1 1008.2,779.8 999.3,790.0 974.1,827.5 957.8,848.4 944.1,859.3 932.8,866.7 911.5,879.0 899.4,884.1 886.1,886.1 880.4,886.3 874.7,885.1 871.1,881.9 868.7,877.8 865.1,869.1 867.9,851.9 870.7,840.7 876.1,826.1 891.8,804.4 921.5,768.6 928.3,757.8 932.6,747.9 934.3,740.9 934.3,735.9 942.6,732.0 947.0,728.7 950.8,724.4 953.3,720.3 954.9,715.6Z"/></clipPath>
</defs>
<path d="M1556.8,671.4 1555.4,690.3 1552.9,709.0 1549.2,727.6 1544.4,746.0 1538.4,764.2 1531.2,782.1 1522.9,799.7 1513.6,816.9 1503.1,833.7 1491.6,850.1 1479.0,865.9 1465.5,881.3 1451.0,896.1 1435.6,910.3 1419.2,923.8 1402.1,936.7 1384.1,948.9 1365.3,960.4 1345.8,971.1 1325.7,981.1 1304.9,990.2 1283.5,998.5 1261.6,1006.0 1239.2,1012.6 1216.5,1018.4 1193.3,1023.2 1169.9,1027.2 1143.2,1030.5 1119.2,1032.5 1095.2,1033.6 1071.0,1033.7 1046.9,1033.0 1022.8,1031.3 998.8,1028.6 974.9,1025.1 951.3,1020.6 928.0,1015.3 904.9,1009.0 882.3,1001.9 860.1,994.0 838.4,985.2 817.3,975.6 796.7,965.2 776.8,954.0 757.6,942.2 739.1,929.6 721.4,916.3 704.5,902.4 688.5,887.8 673.4,872.7 659.3,857.1 646.1,840.9 634.0,824.3 622.9,807.3 612.8,789.9 603.8,772.1 596.0,754.0 589.2,735.7 583.7,717.2 579.2,698.5 576.0,679.7 573.9,660.8 573.0,641.9 573.3,623.0 574.8,604.2 577.1,587.8 580.8,569.2 585.6,550.8 591.6,532.6 598.8,514.7 607.1,497.1 616.4,479.9 626.9,463.1 638.4,446.7 651.0,430.9 664.5,415.5 679.0,400.7 694.4,386.5 710.8,373.0 727.9,360.1 745.9,347.9 764.7,336.4 784.2,325.7 804.3,315.7 825.1,306.6 846.5,298.3 868.4,290.8 890.8,284.2 913.5,278.4 936.7,273.6 960.1,269.6 983.9,266.6 1007.8,264.5 1031.8,263.3 1055.9,263.0 1080.1,263.7 1104.2,265.3 1128.2,267.8 1152.1,271.2 1175.7,275.6 1199.1,280.8 1222.2,286.9 1244.9,293.9 1267.1,301.8 1288.9,310.5 1310.1,320.0 1330.8,330.3 1350.8,341.3 1370.1,353.1 1388.6,365.6 1406.4,378.8 1423.4,392.7 1439.5,407.1 1454.7,422.1 1469.0,437.7 1482.3,453.8 1494.6,470.4 1505.8,487.4 1516.0,504.7 1525.1,522.5 1533.1,540.5 1540.0,558.8 1545.7,577.3 1550.3,595.9 1553.7,614.7 1555.9,633.6 1556.9,652.5ZM1144.6,962.7 1172.4,958.2 1184.7,955.7 1199.9,952.2 1223.7,945.5 1246.9,937.6 1269.4,928.6 1291.1,918.5 1304.2,911.7 1314.5,905.9 1334.2,893.6 1352.8,880.3 1370.9,865.6 1361.4,845.2 1336.3,826.9 1391.3,753.6 1423.4,762.5 1450.5,759.5 1455.8,746.2 1460.0,734.2 1463.5,722.1 1466.5,709.9 1469.2,695.1 1470.7,682.7 1471.7,670.2 1472.0,657.7 1471.7,645.2 1470.7,632.6 1469.2,620.2 1466.5,605.2 1463.5,592.9 1460.0,580.6 1455.8,568.4 1450.5,554.9 1423.4,550.6 1391.3,558.1 1336.3,482.2 1361.4,465.1 1370.9,445.1 1352.8,429.6 1341.3,420.7 1331.7,413.8 1322.0,407.1 1309.4,399.1 1299.0,393.0 1285.8,385.7 1272.2,378.8 1261.1,373.6 1238.3,364.0 1223.7,358.6 1211.9,354.5 1184.7,346.5 1166.2,342.0 1144.6,337.7 1127.0,353.8 1120.0,379.5 1010.0,377.0 1003.0,351.0 985.4,334.1 960.7,338.0 939.2,342.4 918.1,347.8 897.5,354.1 877.4,361.3 855.1,370.6 836.2,379.6 818.1,389.4 800.7,400.0 786.4,409.7 772.7,420.0 759.1,431.2 768.6,451.6 793.7,469.9 738.7,543.2 706.6,534.3 679.5,537.3 676.0,545.8 671.6,557.8 667.8,569.8 664.6,582.0 662.1,594.3 660.1,606.7 658.8,619.1 658.1,631.6 658.1,644.1 658.6,656.6 659.8,669.2 661.6,681.6 664.1,694.0 667.1,706.4 670.8,718.7 675.1,730.8 679.5,741.9 706.6,746.2 738.7,738.7 793.7,814.6 768.6,831.7 759.1,851.7 770.5,861.7 781.8,870.8 793.5,879.6 808.0,889.7 820.6,897.7 833.6,905.3 849.6,913.9 863.3,920.6 877.4,926.9 891.7,932.8 906.3,938.2 921.1,943.2 936.2,947.8 951.5,951.8 966.9,955.4 985.4,959.1 1003.0,943.0 1010.0,917.3 1120.0,919.8 1127.0,945.8Z" transform="translate(0 6)" fill="#ee3000" fill-rule="evenodd"/>
<path d="M1556.8,671.4 1555.4,690.3 1552.9,709.0 1549.2,727.6 1544.4,746.0 1538.4,764.2 1531.2,782.1 1522.9,799.7 1513.6,816.9 1503.1,833.7 1491.6,850.1 1479.0,865.9 1465.5,881.3 1451.0,896.1 1435.6,910.3 1419.2,923.8 1402.1,936.7 1384.1,948.9 1365.3,960.4 1345.8,971.1 1325.7,981.1 1304.9,990.2 1283.5,998.5 1261.6,1006.0 1239.2,1012.6 1216.5,1018.4 1193.3,1023.2 1169.9,1027.2 1143.2,1030.5 1119.2,1032.5 1095.2,1033.6 1071.0,1033.7 1046.9,1033.0 1022.8,1031.3 998.8,1028.6 974.9,1025.1 951.3,1020.6 928.0,1015.3 904.9,1009.0 882.3,1001.9 860.1,994.0 838.4,985.2 817.3,975.6 796.7,965.2 776.8,954.0 757.6,942.2 739.1,929.6 721.4,916.3 704.5,902.4 688.5,887.8 673.4,872.7 659.3,857.1 646.1,840.9 634.0,824.3 622.9,807.3 612.8,789.9 603.8,772.1 596.0,754.0 589.2,735.7 583.7,717.2 579.2,698.5 576.0,679.7 573.9,660.8 573.0,641.9 573.3,623.0 574.8,604.2 577.1,587.8 580.8,569.2 585.6,550.8 591.6,532.6 598.8,514.7 607.1,497.1 616.4,479.9 626.9,463.1 638.4,446.7 651.0,430.9 664.5,415.5 679.0,400.7 694.4,386.5 710.8,373.0 727.9,360.1 745.9,347.9 764.7,336.4 784.2,325.7 804.3,315.7 825.1,306.6 846.5,298.3 868.4,290.8 890.8,284.2 913.5,278.4 936.7,273.6 960.1,269.6 983.9,266.6 1007.8,264.5 1031.8,263.3 1055.9,263.0 1080.1,263.7 1104.2,265.3 1128.2,267.8 1152.1,271.2 1175.7,275.6 1199.1,280.8 1222.2,286.9 1244.9,293.9 1267.1,301.8 1288.9,310.5 1310.1,320.0 1330.8,330.3 1350.8,341.3 1370.1,353.1 1388.6,365.6 1406.4,378.8 1423.4,392.7 1439.5,407.1 1454.7,422.1 1469.0,437.7 1482.3,453.8 1494.6,470.4 1505.8,487.4 1516.0,504.7 1525.1,522.5 1533.1,540.5 1540.0,558.8 1545.7,577.3 1550.3,595.9 1553.7,614.7 1555.9,633.6 1556.9,652.5ZM1144.6,962.7 1172.4,958.2 1184.7,955.7 1199.9,952.2 1223.7,945.5 1246.9,937.6 1269.4,928.6 1291.1,918.5 1304.2,911.7 1314.5,905.9 1334.2,893.6 1352.8,880.3 1370.9,865.6 1361.4,845.2 1336.3,826.9 1391.3,753.6 1423.4,762.5 1450.5,759.5 1455.8,746.2 1460.0,734.2 1463.5,722.1 1466.5,709.9 1469.2,695.1 1470.7,682.7 1471.7,670.2 1472.0,657.7 1471.7,645.2 1470.7,632.6 1469.2,620.2 1466.5,605.2 1463.5,592.9 1460.0,580.6 1455.8,568.4 1450.5,554.9 1423.4,550.6 1391.3,558.1 1336.3,482.2 1361.4,465.1 1370.9,445.1 1352.8,429.6 1341.3,420.7 1331.7,413.8 1322.0,407.1 1309.4,399.1 1299.0,393.0 1285.8,385.7 1272.2,378.8 1261.1,373.6 1238.3,364.0 1223.7,358.6 1211.9,354.5 1184.7,346.5 1166.2,342.0 1144.6,337.7 1127.0,353.8 1120.0,379.5 1010.0,377.0 1003.0,351.0 985.4,334.1 960.7,338.0 939.2,342.4 918.1,347.8 897.5,354.1 877.4,361.3 855.1,370.6 836.2,379.6 818.1,389.4 800.7,400.0 786.4,409.7 772.7,420.0 759.1,431.2 768.6,451.6 793.7,469.9 738.7,543.2 706.6,534.3 679.5,537.3 676.0,545.8 671.6,557.8 667.8,569.8 664.6,582.0 662.1,594.3 660.1,606.7 658.8,619.1 658.1,631.6 658.1,644.1 658.6,656.6 659.8,669.2 661.6,681.6 664.1,694.0 667.1,706.4 670.8,718.7 675.1,730.8 679.5,741.9 706.6,746.2 738.7,738.7 793.7,814.6 768.6,831.7 759.1,851.7 770.5,861.7 781.8,870.8 793.5,879.6 808.0,889.7 820.6,897.7 833.6,905.3 849.6,913.9 863.3,920.6 877.4,926.9 891.7,932.8 906.3,938.2 921.1,943.2 936.2,947.8 951.5,951.8 966.9,955.4 985.4,959.1 1003.0,943.0 1010.0,917.3 1120.0,919.8 1127.0,945.8Z" fill="url(#rg)" fill-rule="evenodd"/>
<clipPath id="ringc"><path d="M1556.8,671.4 1555.4,690.3 1552.9,709.0 1549.2,727.6 1544.4,746.0 1538.4,764.2 1531.2,782.1 1522.9,799.7 1513.6,816.9 1503.1,833.7 1491.6,850.1 1479.0,865.9 1465.5,881.3 1451.0,896.1 1435.6,910.3 1419.2,923.8 1402.1,936.7 1384.1,948.9 1365.3,960.4 1345.8,971.1 1325.7,981.1 1304.9,990.2 1283.5,998.5 1261.6,1006.0 1239.2,1012.6 1216.5,1018.4 1193.3,1023.2 1169.9,1027.2 1143.2,1030.5 1119.2,1032.5 1095.2,1033.6 1071.0,1033.7 1046.9,1033.0 1022.8,1031.3 998.8,1028.6 974.9,1025.1 951.3,1020.6 928.0,1015.3 904.9,1009.0 882.3,1001.9 860.1,994.0 838.4,985.2 817.3,975.6 796.7,965.2 776.8,954.0 757.6,942.2 739.1,929.6 721.4,916.3 704.5,902.4 688.5,887.8 673.4,872.7 659.3,857.1 646.1,840.9 634.0,824.3 622.9,807.3 612.8,789.9 603.8,772.1 596.0,754.0 589.2,735.7 583.7,717.2 579.2,698.5 576.0,679.7 573.9,660.8 573.0,641.9 573.3,623.0 574.8,604.2 577.1,587.8 580.8,569.2 585.6,550.8 591.6,532.6 598.8,514.7 607.1,497.1 616.4,479.9 626.9,463.1 638.4,446.7 651.0,430.9 664.5,415.5 679.0,400.7 694.4,386.5 710.8,373.0 727.9,360.1 745.9,347.9 764.7,336.4 784.2,325.7 804.3,315.7 825.1,306.6 846.5,298.3 868.4,290.8 890.8,284.2 913.5,278.4 936.7,273.6 960.1,269.6 983.9,266.6 1007.8,264.5 1031.8,263.3 1055.9,263.0 1080.1,263.7 1104.2,265.3 1128.2,267.8 1152.1,271.2 1175.7,275.6 1199.1,280.8 1222.2,286.9 1244.9,293.9 1267.1,301.8 1288.9,310.5 1310.1,320.0 1330.8,330.3 1350.8,341.3 1370.1,353.1 1388.6,365.6 1406.4,378.8 1423.4,392.7 1439.5,407.1 1454.7,422.1 1469.0,437.7 1482.3,453.8 1494.6,470.4 1505.8,487.4 1516.0,504.7 1525.1,522.5 1533.1,540.5 1540.0,558.8 1545.7,577.3 1550.3,595.9 1553.7,614.7 1555.9,633.6 1556.9,652.5ZM1144.6,962.7 1172.4,958.2 1184.7,955.7 1199.9,952.2 1223.7,945.5 1246.9,937.6 1269.4,928.6 1291.1,918.5 1304.2,911.7 1314.5,905.9 1334.2,893.6 1352.8,880.3 1370.9,865.6 1361.4,845.2 1336.3,826.9 1391.3,753.6 1423.4,762.5 1450.5,759.5 1455.8,746.2 1460.0,734.2 1463.5,722.1 1466.5,709.9 1469.2,695.1 1470.7,682.7 1471.7,670.2 1472.0,657.7 1471.7,645.2 1470.7,632.6 1469.2,620.2 1466.5,605.2 1463.5,592.9 1460.0,580.6 1455.8,568.4 1450.5,554.9 1423.4,550.6 1391.3,558.1 1336.3,482.2 1361.4,465.1 1370.9,445.1 1352.8,429.6 1341.3,420.7 1331.7,413.8 1322.0,407.1 1309.4,399.1 1299.0,393.0 1285.8,385.7 1272.2,378.8 1261.1,373.6 1238.3,364.0 1223.7,358.6 1211.9,354.5 1184.7,346.5 1166.2,342.0 1144.6,337.7 1127.0,353.8 1120.0,379.5 1010.0,377.0 1003.0,351.0 985.4,334.1 960.7,338.0 939.2,342.4 918.1,347.8 897.5,354.1 877.4,361.3 855.1,370.6 836.2,379.6 818.1,389.4 800.7,400.0 786.4,409.7 772.7,420.0 759.1,431.2 768.6,451.6 793.7,469.9 738.7,543.2 706.6,534.3 679.5,537.3 676.0,545.8 671.6,557.8 667.8,569.8 664.6,582.0 662.1,594.3 660.1,606.7 658.8,619.1 658.1,631.6 658.1,644.1 658.6,656.6 659.8,669.2 661.6,681.6 664.1,694.0 667.1,706.4 670.8,718.7 675.1,730.8 679.5,741.9 706.6,746.2 738.7,738.7 793.7,814.6 768.6,831.7 759.1,851.7 770.5,861.7 781.8,870.8 793.5,879.6 808.0,889.7 820.6,897.7 833.6,905.3 849.6,913.9 863.3,920.6 877.4,926.9 891.7,932.8 906.3,938.2 921.1,943.2 936.2,947.8 951.5,951.8 966.9,955.4 985.4,959.1 1003.0,943.0 1010.0,917.3 1120.0,919.8 1127.0,945.8Z" clip-rule="evenodd"/></clipPath>
<radialGradient id="og" cx=".5" cy=".5" r=".5"><stop offset="0" stop-color="#ff9800" stop-opacity=".9"/><stop offset=".4" stop-color="#ff8400" stop-opacity=".68"/><stop offset=".7" stop-color="#ff6a00" stop-opacity=".35"/><stop offset="1" stop-color="#ff5000" stop-opacity="0"/></radialGradient>
<g clip-path="url(#ringc)">
<ellipse cx="1404.5" cy="502.7" rx="125" ry="97.9" fill="url(#og)"/>
<ellipse cx="1065.0" cy="341.5" rx="125" ry="97.9" fill="url(#og)"/>
<ellipse cx="725.5" cy="487.2" rx="125" ry="97.9" fill="url(#og)"/>
<ellipse cx="725.5" cy="794.1" rx="125" ry="97.9" fill="url(#og)"/>
<ellipse cx="1065.0" cy="955.3" rx="125" ry="97.9" fill="url(#og)"/>
<ellipse cx="1404.5" cy="809.6" rx="125" ry="97.9" fill="url(#og)"/>
</g>
<ellipse cx="1499.5" cy="560.8" rx="16.5" ry="12.9" fill="#8a1800" fill-opacity=".3"/><ellipse cx="1499.5" cy="563.4" rx="16.2" ry="10.1" fill="#fff"/>
<ellipse cx="1421.2" cy="438.6" rx="16.5" ry="12.9" fill="#8a1800" fill-opacity=".3"/><ellipse cx="1421.2" cy="441.2" rx="16.2" ry="10.1" fill="#fff"/>
<ellipse cx="1314.5" cy="359.0" rx="16.5" ry="12.9" fill="#8a1800" fill-opacity=".3"/><ellipse cx="1314.5" cy="361.6" rx="16.2" ry="10.1" fill="#fff"/>
<ellipse cx="1513.5" cy="621.7" rx="8" ry="6.3" fill="#8a1800" fill-opacity=".3"/><ellipse cx="1513.5" cy="624.3" rx="7.7" ry="3.5" fill="#fff"/>
<ellipse cx="1477.0" cy="514.2" rx="8" ry="6.3" fill="#8a1800" fill-opacity=".3"/><ellipse cx="1477.0" cy="516.8" rx="7.7" ry="3.5" fill="#fff"/>
<ellipse cx="1366.8" cy="392.9" rx="8" ry="6.3" fill="#8a1800" fill-opacity=".3"/><ellipse cx="1366.8" cy="395.5" rx="7.7" ry="3.5" fill="#fff"/>
<ellipse cx="1486.1" cy="602.8" rx="8" ry="6.3" fill="#8a1800" fill-opacity=".3"/><ellipse cx="1486.1" cy="605.4" rx="7.7" ry="3.5" fill="#fff"/>
<ellipse cx="1333.7" cy="394.7" rx="8" ry="6.3" fill="#8a1800" fill-opacity=".3"/><ellipse cx="1333.7" cy="397.3" rx="7.7" ry="3.5" fill="#fff"/>
<ellipse cx="1474.6" cy="472.6" rx="8" ry="6.3" fill="#8a1800" fill-opacity=".3"/><ellipse cx="1474.6" cy="475.2" rx="7.7" ry="3.5" fill="#fff"/>
<ellipse cx="1174.3" cy="307.5" rx="16.5" ry="12.9" fill="#8a1800" fill-opacity=".3"/><ellipse cx="1174.3" cy="310.1" rx="16.2" ry="10.1" fill="#fff"/>
<ellipse cx="1002.1" cy="296.5" rx="16.5" ry="12.9" fill="#8a1800" fill-opacity=".3"/><ellipse cx="1002.1" cy="299.1" rx="16.2" ry="10.1" fill="#fff"/>
<ellipse cx="863.3" cy="327.1" rx="16.5" ry="12.9" fill="#8a1800" fill-opacity=".3"/><ellipse cx="863.3" cy="329.7" rx="16.2" ry="10.1" fill="#fff"/>
<ellipse cx="1248.4" cy="330.0" rx="8" ry="6.3" fill="#8a1800" fill-opacity=".3"/><ellipse cx="1248.4" cy="332.6" rx="7.7" ry="3.5" fill="#fff"/>
<ellipse cx="1112.1" cy="298.3" rx="8" ry="6.3" fill="#8a1800" fill-opacity=".3"/><ellipse cx="1112.1" cy="300.9" rx="7.7" ry="3.5" fill="#fff"/>
<ellipse cx="925.6" cy="309.4" rx="8" ry="6.3" fill="#8a1800" fill-opacity=".3"/><ellipse cx="925.6" cy="312.0" rx="7.7" ry="3.5" fill="#fff"/>
<ellipse cx="1214.5" cy="338.6" rx="8" ry="6.3" fill="#8a1800" fill-opacity=".3"/><ellipse cx="1214.5" cy="341.2" rx="7.7" ry="3.5" fill="#fff"/>
<ellipse cx="912.0" cy="332.8" rx="8" ry="6.3" fill="#8a1800" fill-opacity=".3"/><ellipse cx="912.0" cy="335.4" rx="7.7" ry="3.5" fill="#fff"/>
<ellipse cx="1065.0" cy="278.0" rx="8" ry="6.3" fill="#8a1800" fill-opacity=".3"/><ellipse cx="1065.0" cy="280.6" rx="7.7" ry="3.5" fill="#fff"/>
<ellipse cx="739.9" cy="395.1" rx="16.5" ry="12.9" fill="#8a1800" fill-opacity=".3"/><ellipse cx="739.9" cy="397.7" rx="16.2" ry="10.1" fill="#fff"/>
<ellipse cx="645.9" cy="506.3" rx="16.5" ry="12.9" fill="#8a1800" fill-opacity=".3"/><ellipse cx="645.9" cy="508.9" rx="16.2" ry="10.1" fill="#fff"/>
<ellipse cx="613.8" cy="616.5" rx="16.5" ry="12.9" fill="#8a1800" fill-opacity=".3"/><ellipse cx="613.8" cy="619.1" rx="16.2" ry="10.1" fill="#fff"/>
<ellipse cx="799.9" cy="356.7" rx="8" ry="6.3" fill="#8a1800" fill-opacity=".3"/><ellipse cx="799.9" cy="359.3" rx="7.7" ry="3.5" fill="#fff"/>
<ellipse cx="700.1" cy="432.5" rx="8" ry="6.3" fill="#8a1800" fill-opacity=".3"/><ellipse cx="700.1" cy="435.1" rx="7.7" ry="3.5" fill="#fff"/>
<ellipse cx="623.9" cy="564.9" rx="8" ry="6.3" fill="#8a1800" fill-opacity=".3"/><ellipse cx="623.9" cy="567.5" rx="7.7" ry="3.5" fill="#fff"/>
<ellipse cx="793.4" cy="384.2" rx="8" ry="6.3" fill="#8a1800" fill-opacity=".3"/><ellipse cx="793.4" cy="386.8" rx="7.7" ry="3.5" fill="#fff"/>
<ellipse cx="643.3" cy="586.5" rx="8" ry="6.3" fill="#8a1800" fill-opacity=".3"/><ellipse cx="643.3" cy="589.1" rx="7.7" ry="3.5" fill="#fff"/>
<ellipse cx="655.4" cy="453.9" rx="8" ry="6.3" fill="#8a1800" fill-opacity=".3"/><ellipse cx="655.4" cy="456.5" rx="7.7" ry="3.5" fill="#fff"/>
<ellipse cx="630.5" cy="736.0" rx="16.5" ry="12.9" fill="#8a1800" fill-opacity=".3"/><ellipse cx="630.5" cy="738.6" rx="16.2" ry="10.1" fill="#fff"/>
<ellipse cx="708.8" cy="858.2" rx="16.5" ry="12.9" fill="#8a1800" fill-opacity=".3"/><ellipse cx="708.8" cy="860.8" rx="16.2" ry="10.1" fill="#fff"/>
<ellipse cx="815.5" cy="937.8" rx="16.5" ry="12.9" fill="#8a1800" fill-opacity=".3"/><ellipse cx="815.5" cy="940.4" rx="16.2" ry="10.1" fill="#fff"/>
<ellipse cx="616.5" cy="675.1" rx="8" ry="6.3" fill="#8a1800" fill-opacity=".3"/><ellipse cx="616.5" cy="677.7" rx="7.7" ry="3.5" fill="#fff"/>
<ellipse cx="653.0" cy="782.6" rx="8" ry="6.3" fill="#8a1800" fill-opacity=".3"/><ellipse cx="653.0" cy="785.2" rx="7.7" ry="3.5" fill="#fff"/>
<ellipse cx="763.2" cy="903.9" rx="8" ry="6.3" fill="#8a1800" fill-opacity=".3"/><ellipse cx="763.2" cy="906.5" rx="7.7" ry="3.5" fill="#fff"/>
<ellipse cx="643.9" cy="694.0" rx="8" ry="6.3" fill="#8a1800" fill-opacity=".3"/><ellipse cx="643.9" cy="696.6" rx="7.7" ry="3.5" fill="#fff"/>
<ellipse cx="796.3" cy="902.1" rx="8" ry="6.3" fill="#8a1800" fill-opacity=".3"/><ellipse cx="796.3" cy="904.7" rx="7.7" ry="3.5" fill="#fff"/>
<ellipse cx="655.4" cy="824.2" rx="8" ry="6.3" fill="#8a1800" fill-opacity=".3"/><ellipse cx="655.4" cy="826.8" rx="7.7" ry="3.5" fill="#fff"/>
<ellipse cx="955.7" cy="989.3" rx="16.5" ry="12.9" fill="#8a1800" fill-opacity=".3"/><ellipse cx="955.7" cy="991.9" rx="16.2" ry="10.1" fill="#fff"/>
<ellipse cx="1127.9" cy="1000.3" rx="16.5" ry="12.9" fill="#8a1800" fill-opacity=".3"/><ellipse cx="1127.9" cy="1002.9" rx="16.2" ry="10.1" fill="#fff"/>
<ellipse cx="1266.7" cy="969.7" rx="16.5" ry="12.9" fill="#8a1800" fill-opacity=".3"/><ellipse cx="1266.7" cy="972.3" rx="16.2" ry="10.1" fill="#fff"/>
<ellipse cx="881.6" cy="966.8" rx="8" ry="6.3" fill="#8a1800" fill-opacity=".3"/><ellipse cx="881.6" cy="969.4" rx="7.7" ry="3.5" fill="#fff"/>
<ellipse cx="1017.9" cy="998.5" rx="8" ry="6.3" fill="#8a1800" fill-opacity=".3"/><ellipse cx="1017.9" cy="1001.1" rx="7.7" ry="3.5" fill="#fff"/>
<ellipse cx="1204.4" cy="987.4" rx="8" ry="6.3" fill="#8a1800" fill-opacity=".3"/><ellipse cx="1204.4" cy="990.0" rx="7.7" ry="3.5" fill="#fff"/>
<ellipse cx="915.5" cy="958.2" rx="8" ry="6.3" fill="#8a1800" fill-opacity=".3"/><ellipse cx="915.5" cy="960.8" rx="7.7" ry="3.5" fill="#fff"/>
<ellipse cx="1218.0" cy="964.0" rx="8" ry="6.3" fill="#8a1800" fill-opacity=".3"/><ellipse cx="1218.0" cy="966.6" rx="7.7" ry="3.5" fill="#fff"/>
<ellipse cx="1065.0" cy="1018.8" rx="8" ry="6.3" fill="#8a1800" fill-opacity=".3"/><ellipse cx="1065.0" cy="1021.4" rx="7.7" ry="3.5" fill="#fff"/>
<ellipse cx="1390.1" cy="901.7" rx="16.5" ry="12.9" fill="#8a1800" fill-opacity=".3"/><ellipse cx="1390.1" cy="904.3" rx="16.2" ry="10.1" fill="#fff"/>
<ellipse cx="1484.1" cy="790.5" rx="16.5" ry="12.9" fill="#8a1800" fill-opacity=".3"/><ellipse cx="1484.1" cy="793.1" rx="16.2" ry="10.1" fill="#fff"/>
<ellipse cx="1516.2" cy="680.3" rx="16.5" ry="12.9" fill="#8a1800" fill-opacity=".3"/><ellipse cx="1516.2" cy="682.9" rx="16.2" ry="10.1" fill="#fff"/>
<ellipse cx="1330.1" cy="940.1" rx="8" ry="6.3" fill="#8a1800" fill-opacity=".3"/><ellipse cx="1330.1" cy="942.7" rx="7.7" ry="3.5" fill="#fff"/>
<ellipse cx="1429.9" cy="864.3" rx="8" ry="6.3" fill="#8a1800" fill-opacity=".3"/><ellipse cx="1429.9" cy="866.9" rx="7.7" ry="3.5" fill="#fff"/>
<ellipse cx="1506.1" cy="731.9" rx="8" ry="6.3" fill="#8a1800" fill-opacity=".3"/><ellipse cx="1506.1" cy="734.5" rx="7.7" ry="3.5" fill="#fff"/>
<ellipse cx="1336.6" cy="912.6" rx="8" ry="6.3" fill="#8a1800" fill-opacity=".3"/><ellipse cx="1336.6" cy="915.2" rx="7.7" ry="3.5" fill="#fff"/>
<ellipse cx="1486.7" cy="710.3" rx="8" ry="6.3" fill="#8a1800" fill-opacity=".3"/><ellipse cx="1486.7" cy="712.9" rx="7.7" ry="3.5" fill="#fff"/>
<ellipse cx="1474.6" cy="842.9" rx="8" ry="6.3" fill="#8a1800" fill-opacity=".3"/><ellipse cx="1474.6" cy="845.5" rx="7.7" ry="3.5" fill="#fff"/>
<g transform="rotate(1.3 1065.0 648.4)">
<ellipse cx="1064.5" cy="662.0" rx="209" ry="163.6" fill="#59636b" stroke="#1e2226" stroke-width="1"/>
<rect x="855.5" y="649.0" width="418" height="13" fill="#59636b"/>
<ellipse cx="1064.5" cy="649.0" rx="209" ry="163.6" fill="#a3aeb9" stroke="#1e2226" stroke-width="1"/>
<ellipse cx="1064.5" cy="649.0" rx="122" ry="95.5" fill="url(#hw)" stroke="#1e2226" stroke-width="1"/>
</g>
<ellipse cx="1064.5" cy="668.0" rx="122" ry="95.5" fill="#fff" stroke="#1e2226" stroke-width=".8" clip-path="url(#hubhole)" transform="rotate(1.3 1065.0 648.4)"/>
<path d="M1065 634c-4 0-7 3-6 6l6 7 6-7c1-3-2-6-6-6z" fill="#3a0a6a"/>
<ellipse cx="966" cy="724" rx="7" ry="5.500" fill="#f7a21c"/><ellipse cx="966" cy="721.500" rx="7" ry="5" fill="#ffb62e"/>
<use href="#bodyp" transform="translate(0 16)" fill="url(#tgw)" fill-rule="evenodd"/>
<use href="#bodyp" transform="translate(0 14)" fill="url(#tgw)" fill-rule="evenodd"/>
<use href="#bodyp" transform="translate(0 12)" fill="url(#tgw)" fill-rule="evenodd"/>
<use href="#bodyp" transform="translate(0 10)" fill="url(#tgw)" fill-rule="evenodd"/>
<use href="#bodyp" transform="translate(0 8)" fill="url(#tgw)" fill-rule="evenodd"/>
<use href="#bodyp" transform="translate(0 6)" fill="url(#tgw)" fill-rule="evenodd"/>
<use href="#bodyp" transform="translate(0 4)" fill="url(#tgw)" fill-rule="evenodd"/>
<use href="#bodyp" transform="translate(0 2)" fill="url(#tgw)" fill-rule="evenodd"/>
<ellipse cx="1394.5" cy="490.0" rx="16" ry="12.500" fill="url(#thg)"/><ellipse cx="1394.5" cy="499.5" rx="8.500" ry="2.800" fill="#fff"/>
<ellipse cx="1065.4" cy="333.8" rx="16" ry="12.500" fill="url(#thg)"/><ellipse cx="1065.4" cy="343.3" rx="8.500" ry="2.800" fill="#fff"/>
<ellipse cx="736.3" cy="475.0" rx="16" ry="12.500" fill="url(#thg)"/><ellipse cx="736.3" cy="484.5" rx="8.500" ry="2.800" fill="#fff"/>
<ellipse cx="736.3" cy="772.6" rx="16" ry="12.500" fill="url(#thg)"/><ellipse cx="736.3" cy="782.1" rx="8.500" ry="2.800" fill="#fff"/>
<ellipse cx="1065.4" cy="928.8" rx="16" ry="12.500" fill="url(#thg)"/><ellipse cx="1065.4" cy="938.3" rx="8.500" ry="2.800" fill="#fff"/>
<ellipse cx="1394.5" cy="787.6" rx="16" ry="12.500" fill="url(#thg)"/><ellipse cx="1394.5" cy="797.1" rx="8.500" ry="2.800" fill="#fff"/>
<use href="#bodyp" fill="url(#tg)" fill-rule="evenodd"/>
<ellipse cx="1211.3" cy="572.7" rx="47" ry="40.8" fill="url(#bb)" clip-path="url(#swc)"/>
<g transform="translate(1211.3 568.7)"><ellipse rx="17.500" ry="13.500" fill="#2c0a66"/><ellipse cy="1" rx="15" ry="11" fill="#4a0a52"/>
<g stroke="#2a0868" stroke-width="2.600" stroke-linecap="round" fill="none"><path d="M0 3L-11 -1M0 3L-7 -8M0 3L1 -9M0 3L9 -6M0 3L13 2M0 3L-8 8M0 3L6 9"/></g>
<g fill="#e8a0d0"><circle cx="-10.500" cy="-6" r="1.100"/><circle cx="-9" cy="3" r="1.100"/><circle cx="5.500" cy="-7.500" r="1.200"/><circle cx="7" cy="2.500" r="1"/><circle cx="14.500" cy="3.500" r="1"/><circle cx="6" cy="11" r=".9"/></g></g>
<ellipse cx="1065.4" cy="503.4" rx="47" ry="40.8" fill="url(#bb)" clip-path="url(#swc)"/>
<g transform="translate(1065.4 499.4)"><ellipse rx="17.500" ry="13.500" fill="#2c0a66"/><ellipse cy="1" rx="15" ry="11" fill="#4a0a52"/>
<g stroke="#2a0868" stroke-width="2.600" stroke-linecap="round" fill="none"><path d="M0 3L-11 -1M0 3L-7 -8M0 3L1 -9M0 3L9 -6M0 3L13 2M0 3L-8 8M0 3L6 9"/></g>
<g fill="#e8a0d0"><circle cx="-10.500" cy="-6" r="1.100"/><circle cx="-9" cy="3" r="1.100"/><circle cx="5.500" cy="-7.500" r="1.200"/><circle cx="7" cy="2.500" r="1"/><circle cx="14.500" cy="3.500" r="1"/><circle cx="6" cy="11" r=".9"/></g></g>
<ellipse cx="919.5" cy="566.0" rx="47" ry="40.8" fill="url(#bb)" clip-path="url(#swc)"/>
<g transform="translate(919.5 562.0)"><ellipse rx="17.500" ry="13.500" fill="#2c0a66"/><ellipse cy="1" rx="15" ry="11" fill="#4a0a52"/>
<g stroke="#2a0868" stroke-width="2.600" stroke-linecap="round" fill="none"><path d="M0 3L-11 -1M0 3L-7 -8M0 3L1 -9M0 3L9 -6M0 3L13 2M0 3L-8 8M0 3L6 9"/></g>
<g fill="#e8a0d0"><circle cx="-10.500" cy="-6" r="1.100"/><circle cx="-9" cy="3" r="1.100"/><circle cx="5.500" cy="-7.500" r="1.200"/><circle cx="7" cy="2.500" r="1"/><circle cx="14.500" cy="3.500" r="1"/><circle cx="6" cy="11" r=".9"/></g></g>
<ellipse cx="919.5" cy="697.9" rx="47" ry="40.8" fill="url(#bb)" clip-path="url(#swc)"/>
<g transform="translate(919.5 693.9)"><ellipse rx="17.500" ry="13.500" fill="#2c0a66"/><ellipse cy="1" rx="15" ry="11" fill="#4a0a52"/>
<g stroke="#2a0868" stroke-width="2.600" stroke-linecap="round" fill="none"><path d="M0 3L-11 -1M0 3L-7 -8M0 3L1 -9M0 3L9 -6M0 3L13 2M0 3L-8 8M0 3L6 9"/></g>
<g fill="#e8a0d0"><circle cx="-10.500" cy="-6" r="1.100"/><circle cx="-9" cy="3" r="1.100"/><circle cx="5.500" cy="-7.500" r="1.200"/><circle cx="7" cy="2.500" r="1"/><circle cx="14.500" cy="3.500" r="1"/><circle cx="6" cy="11" r=".9"/></g></g>
<ellipse cx="1065.4" cy="767.2" rx="47" ry="40.8" fill="url(#bb)" clip-path="url(#swc)"/>
<g transform="translate(1065.4 763.2)"><ellipse rx="17.500" ry="13.500" fill="#2c0a66"/><ellipse cy="1" rx="15" ry="11" fill="#4a0a52"/>
<g stroke="#2a0868" stroke-width="2.600" stroke-linecap="round" fill="none"><path d="M0 3L-11 -1M0 3L-7 -8M0 3L1 -9M0 3L9 -6M0 3L13 2M0 3L-8 8M0 3L6 9"/></g>
<g fill="#e8a0d0"><circle cx="-10.500" cy="-6" r="1.100"/><circle cx="-9" cy="3" r="1.100"/><circle cx="5.500" cy="-7.500" r="1.200"/><circle cx="7" cy="2.500" r="1"/><circle cx="14.500" cy="3.500" r="1"/><circle cx="6" cy="11" r=".9"/></g></g>
<ellipse cx="1211.3" cy="704.6" rx="47" ry="40.8" fill="url(#bb)" clip-path="url(#swc)"/>
<g transform="translate(1211.3 700.6)"><ellipse rx="17.500" ry="13.500" fill="#2c0a66"/><ellipse cy="1" rx="15" ry="11" fill="#4a0a52"/>
<g stroke="#2a0868" stroke-width="2.600" stroke-linecap="round" fill="none"><path d="M0 3L-11 -1M0 3L-7 -8M0 3L1 -9M0 3L9 -6M0 3L13 2M0 3L-8 8M0 3L6 9"/></g>
<g fill="#e8a0d0"><circle cx="-10.500" cy="-6" r="1.100"/><circle cx="-9" cy="3" r="1.100"/><circle cx="5.500" cy="-7.500" r="1.200"/><circle cx="7" cy="2.500" r="1"/><circle cx="14.500" cy="3.500" r="1"/><circle cx="6" cy="11" r=".9"/></g></g>
</svg>
</body></html>
